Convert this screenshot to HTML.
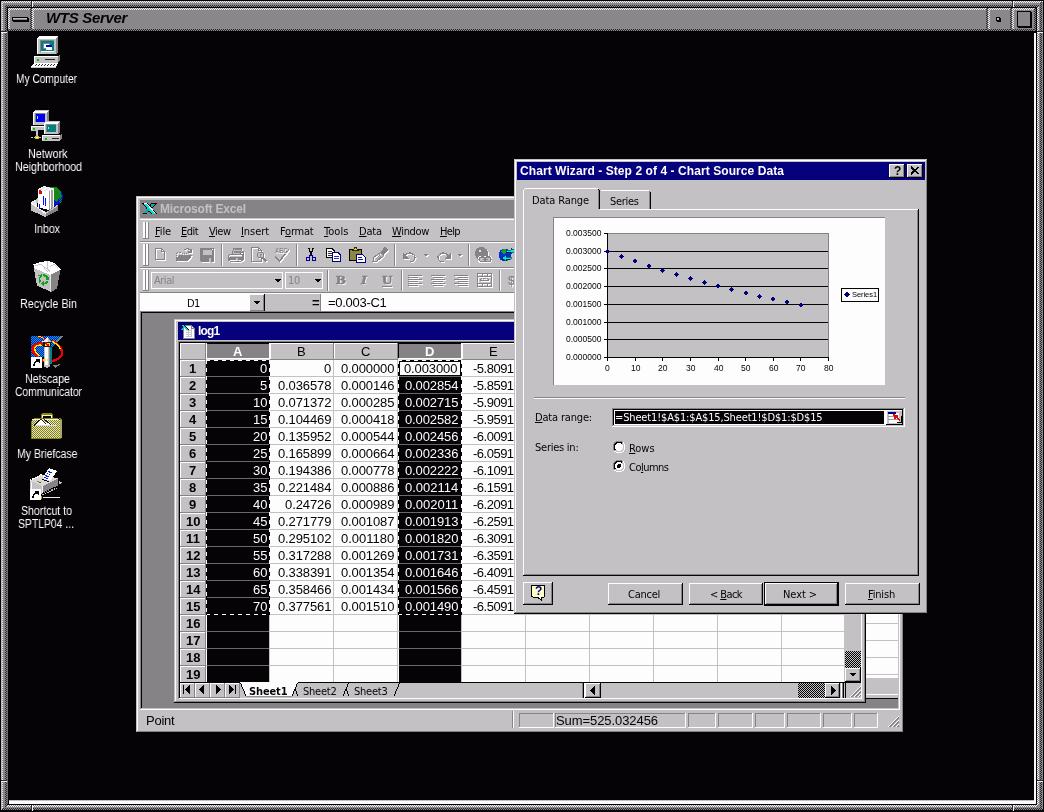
<!DOCTYPE html>
<html lang="en"><head><meta charset="utf-8"><title>WTS Server</title>
<style>
html,body{margin:0;padding:0;background:#050305;width:1044px;height:812px;overflow:hidden}
div,span,svg{position:absolute;box-sizing:border-box}
span{display:block;will-change:transform}
u{text-decoration:underline;text-underline-offset:1px;text-decoration-thickness:1px}
svg{overflow:visible;shape-rendering:crispEdges}
</style></head>
<body>
<div style="left:0px;top:0px;width:1044px;height:8px;background:#898789;"></div>
<div style="left:0px;top:804px;width:1044px;height:8px;background:#898789;"></div>
<div style="left:0px;top:0px;width:8px;height:812px;background:#898789;"></div>
<div style="left:1036px;top:0px;width:8px;height:812px;background:#898789;"></div>
<div style="left:1px;top:1px;width:1042px;height:2px;background:repeating-conic-gradient(#f4f4f4 0 25%,#898789 0 50%) 0 0/2px 2px;"></div>
<div style="left:5px;top:5px;width:1034px;height:2px;background:repeating-conic-gradient(#2a282a 0 25%,#898789 0 50%) 0 0/2px 2px;"></div>
<div style="left:1px;top:1px;width:2px;height:810px;background:repeating-conic-gradient(#f4f4f4 0 25%,#898789 0 50%) 0 0/2px 2px;"></div>
<div style="left:5px;top:5px;width:2px;height:802px;background:repeating-conic-gradient(#2a282a 0 25%,#898789 0 50%) 0 0/2px 2px;"></div>
<div style="left:7px;top:805px;width:1030px;height:2px;background:repeating-conic-gradient(#f4f4f4 0 25%,#898789 0 50%) 0 0/2px 2px;"></div>
<div style="left:2px;top:808px;width:1041px;height:2px;background:repeating-conic-gradient(#2a282a 0 25%,#898789 0 50%) 0 0/2px 2px;"></div>
<div style="left:1037px;top:7px;width:2px;height:798px;background:repeating-conic-gradient(#f4f4f4 0 25%,#898789 0 50%) 0 0/2px 2px;"></div>
<div style="left:1040px;top:2px;width:2px;height:809px;background:repeating-conic-gradient(#2a282a 0 25%,#898789 0 50%) 0 0/2px 2px;"></div>
<div style="left:0px;top:0px;width:1044px;height:1px;background:#050305;"></div>
<div style="left:0px;top:0px;width:1px;height:812px;background:#050305;"></div>
<div style="left:0px;top:810px;width:1044px;height:1px;background:#050305;"></div>
<div style="left:0px;top:811px;width:1044px;height:1px;background:#050305;"></div>
<div style="left:1043px;top:0px;width:1px;height:812px;background:#050305;"></div>
<div style="left:7px;top:7px;width:1030px;height:1px;background:#050305;"></div>
<div style="left:7px;top:7px;width:1px;height:24px;background:#050305;"></div>
<div style="left:7px;top:31px;width:1px;height:774px;background:#6e6c6f;"></div>
<div style="left:1px;top:2px;width:1px;height:808px;background:#bdbbbe;"></div>
<div style="left:7px;top:804px;width:1030px;height:1px;background:#050305;"></div>
<div style="left:1036px;top:7px;width:1px;height:798px;background:#050305;"></div>
<div style="left:31px;top:1px;width:1px;height:6px;background:#2a282a;"></div>
<div style="left:32px;top:1px;width:1px;height:6px;background:#f4f4f4;"></div>
<div style="left:31px;top:805px;width:1px;height:6px;background:#2a282a;"></div>
<div style="left:32px;top:805px;width:1px;height:6px;background:#f4f4f4;"></div>
<div style="left:1012px;top:1px;width:1px;height:6px;background:#2a282a;"></div>
<div style="left:1013px;top:1px;width:1px;height:6px;background:#f4f4f4;"></div>
<div style="left:1012px;top:805px;width:1px;height:6px;background:#2a282a;"></div>
<div style="left:1013px;top:805px;width:1px;height:6px;background:#f4f4f4;"></div>
<div style="left:1px;top:31px;width:6px;height:1px;background:#2a282a;"></div>
<div style="left:1px;top:32px;width:6px;height:1px;background:#f4f4f4;"></div>
<div style="left:1037px;top:31px;width:6px;height:1px;background:#2a282a;"></div>
<div style="left:1037px;top:32px;width:6px;height:1px;background:#f4f4f4;"></div>
<div style="left:1px;top:780px;width:6px;height:1px;background:#2a282a;"></div>
<div style="left:1px;top:781px;width:6px;height:1px;background:#f4f4f4;"></div>
<div style="left:1037px;top:780px;width:6px;height:1px;background:#2a282a;"></div>
<div style="left:1037px;top:781px;width:6px;height:1px;background:#f4f4f4;"></div>
<div style="left:8px;top:8px;width:1028px;height:23px;background:#898789;"></div>
<div style="left:8px;top:8px;width:24px;height:2px;background:repeating-conic-gradient(#f4f4f4 0 25%,#898789 0 50%) 0 0/2px 2px;"></div>
<div style="left:8px;top:8px;width:2px;height:23px;background:repeating-conic-gradient(#f4f4f4 0 25%,#898789 0 50%) 0 0/2px 2px;"></div>
<div style="left:8px;top:29px;width:24px;height:2px;background:repeating-conic-gradient(#2a282a 0 25%,#898789 0 50%) 0 0/2px 2px;"></div>
<div style="left:30px;top:8px;width:2px;height:23px;background:repeating-conic-gradient(#2a282a 0 25%,#898789 0 50%) 0 0/2px 2px;"></div>
<div style="left:32px;top:8px;width:956px;height:2px;background:repeating-conic-gradient(#f4f4f4 0 25%,#898789 0 50%) 0 0/2px 2px;"></div>
<div style="left:32px;top:8px;width:2px;height:23px;background:repeating-conic-gradient(#f4f4f4 0 25%,#898789 0 50%) 0 0/2px 2px;"></div>
<div style="left:32px;top:29px;width:956px;height:2px;background:repeating-conic-gradient(#2a282a 0 25%,#898789 0 50%) 0 0/2px 2px;"></div>
<div style="left:986px;top:8px;width:2px;height:23px;background:repeating-conic-gradient(#2a282a 0 25%,#898789 0 50%) 0 0/2px 2px;"></div>
<div style="left:988px;top:8px;width:24px;height:2px;background:repeating-conic-gradient(#f4f4f4 0 25%,#898789 0 50%) 0 0/2px 2px;"></div>
<div style="left:988px;top:8px;width:2px;height:23px;background:repeating-conic-gradient(#f4f4f4 0 25%,#898789 0 50%) 0 0/2px 2px;"></div>
<div style="left:988px;top:29px;width:24px;height:2px;background:repeating-conic-gradient(#2a282a 0 25%,#898789 0 50%) 0 0/2px 2px;"></div>
<div style="left:1010px;top:8px;width:2px;height:23px;background:repeating-conic-gradient(#2a282a 0 25%,#898789 0 50%) 0 0/2px 2px;"></div>
<div style="left:1012px;top:8px;width:24px;height:2px;background:repeating-conic-gradient(#f4f4f4 0 25%,#898789 0 50%) 0 0/2px 2px;"></div>
<div style="left:1012px;top:8px;width:2px;height:23px;background:repeating-conic-gradient(#f4f4f4 0 25%,#898789 0 50%) 0 0/2px 2px;"></div>
<div style="left:1012px;top:29px;width:24px;height:2px;background:repeating-conic-gradient(#2a282a 0 25%,#898789 0 50%) 0 0/2px 2px;"></div>
<div style="left:1034px;top:8px;width:2px;height:23px;background:repeating-conic-gradient(#2a282a 0 25%,#898789 0 50%) 0 0/2px 2px;"></div>
<div style="left:12px;top:17px;width:16px;height:4px;background:#898789;border:1px solid #050305;"></div>
<div style="left:13px;top:21px;width:16px;height:1px;background:#050305;"></div>
<div style="left:28px;top:18px;width:1px;height:4px;background:#050305;"></div>
<div style="left:13px;top:18px;width:14px;height:1px;background:#bbb;"></div>
<div style="left:996px;top:17px;width:4px;height:4px;background:#bbb;border:1px solid #050305;"></div>
<div style="left:997px;top:21px;width:4px;height:1px;background:#050305;"></div>
<div style="left:1000px;top:18px;width:1px;height:4px;background:#050305;"></div>
<div style="left:1017px;top:11px;width:14px;height:16px;background:#898789;border:1px solid #050305;"></div>
<div style="left:1018px;top:27px;width:14px;height:1px;background:#050305;"></div>
<div style="left:1031px;top:12px;width:1px;height:16px;background:#050305;"></div>
<span style="left:46.00px;top:10px;font:italic bold 15px 'Liberation Sans',sans-serif;line-height:16px;height:16px;color:#050305;white-space:pre;letter-spacing:-0.320px;">WTS Server</span>
<div style="left:8px;top:31px;width:1028px;height:773px;background:#050305;"></div>
<div style="left:9px;top:800px;width:1027px;height:1px;background:#bfbdc0;"></div>
<div style="left:9px;top:801px;width:1027px;height:3px;background:#fdfdfd;"></div>
<div style="left:1034px;top:33px;width:2px;height:771px;background:#fdfdfd;"></div>
<svg style="left:30px;top:36px" width="32" height="32" viewBox="0 0 32 32" >
<polygon points="7,2 9,0 28,0 28,16 26,18 7,18" fill="#c3c1c4"/>
<polygon points="7,2 9,0 28,0 26,2" fill="#fff"/><polygon points="26,2 28,0 28,16 26,18" fill="#858386"/>
<rect x="7" y="2" width="19" height="16" fill="#c3c1c4"/><path d="M7.5 18V2.5H26" stroke="#fff" fill="none"/>
<rect x="10" y="4" width="14" height="12" fill="#fff"/><rect x="11" y="5" width="13" height="10" fill="#00807f"/>
<path d="M10.5 16V4.5H24" stroke="#858386" fill="none"/>
<rect x="13" y="7" width="6" height="5" fill="#fff" stroke="#858386" stroke-width="1"/><rect x="16" y="9" width="6" height="5" fill="#fff"/><rect x="16" y="9" width="6" height="1.5" fill="#0000d0"/>
<polygon points="4,20 28,20 30,18 30,24 28,27 4,27" fill="#c3c1c4"/><polygon points="28,20 30,18 30,24 28,27" fill="#858386"/>
<path d="M4.5 27V20.5H28" stroke="#fff" fill="none"/>
<rect x="7" y="23" width="2" height="2" fill="#00c000"/><rect x="15" y="23" width="10" height="1.3" fill="#222"/>
<polygon points="1,31 4,27 28,27 26,31" fill="#fff"/><path d="M5 30l2-2M8 30l2-2M11 30l2-2M14 30l2-2M17 30l2-2M20 30l2-2M23 30l2-2" stroke="#222" stroke-width="1.2"/>
<path d="M1 31.5H26" stroke="#c3c1c4"/>
</svg>
<span style="left:16.00px;top:71px;font:12.5px 'Liberation Sans',sans-serif;line-height:16px;height:16px;color:#fdfdfd;white-space:pre;transform:scaleX(0.8130);transform-origin:0 0;">My Computer</span>
<svg style="left:30px;top:110px" width="32" height="32" viewBox="0 0 32 32" >
<g id="pcb"><polygon points="3,2 5,0 19,0 19,13 17,15 3,15" fill="#c3c1c4"/><polygon points="17,2 19,0 19,13 17,15" fill="#858386"/>
<path d="M3.5 15V2.5H17M4 1.5H18" stroke="#fff" fill="none"/>
<rect x="6" y="4" width="9" height="8" fill="#0000f0"/><path d="M5.5 12V3.5H15" stroke="#858386" fill="none"/><rect x="7" y="6" width="1.2" height="3" fill="#6ff"/></g>
<polygon points="1,16 14,16 15,15 15,20 1,21" fill="#c3c1c4"/><path d="M1.5 20V16.5H14" stroke="#fff" fill="none"/><rect x="3" y="18" width="2" height="1.5" fill="#00c000"/>
<rect x="6.3" y="21" width="1.4" height="6" fill="#c3c1c4"/><path d="M1 27.5h2M4 27.5h1M9 27.5h2M12 27.5h1" stroke="#c3c1c4"/>
<rect x="5" y="26" width="3.5" height="3" fill="#d8c800"/><rect x="6" y="26.5" width="1.5" height="1.5" fill="#fff"/>
<g transform="translate(11,11)"><polygon points="3,2 5,0 19,0 19,11 17,13 3,13" fill="#c3c1c4"/><polygon points="17,2 19,0 19,11 17,13" fill="#858386"/>
<path d="M3.5 13V2.5H17M4 1.5H18" stroke="#fff" fill="none"/>
<rect x="6" y="4" width="9" height="6.5" fill="#00807f"/><path d="M5.5 11V3.5H15" stroke="#858386" fill="none"/><rect x="7" y="5.5" width="1.2" height="2.5" fill="#6ff"/></g>
<polygon points="12,25 30,25 32,23 32,28 30,30.5 12,30.5" fill="#c3c1c4"/><polygon points="30,25 32,23 32,28 30,30.5" fill="#858386"/>
<path d="M12.5 30V25.5H30" stroke="#fff" fill="none"/><rect x="15" y="28" width="2" height="1.5" fill="#00c000"/><rect x="22" y="27.5" width="7" height="1.2" fill="#222"/>
</svg>
<span style="left:27.75px;top:146px;font:12.5px 'Liberation Sans',sans-serif;line-height:16px;height:16px;color:#fdfdfd;white-space:pre;transform:scaleX(0.8616);transform-origin:0 0;">Network</span>
<span style="left:14.50px;top:159px;font:12.5px 'Liberation Sans',sans-serif;line-height:16px;height:16px;color:#fdfdfd;white-space:pre;transform:scaleX(0.8530);transform-origin:0 0;">Neighborhood</span>
<svg style="left:24px;top:180px" width="48" height="42" viewBox="0 0 48 42" shape-rendering="auto">
<circle cx="30.500" cy="17" r="8.500" fill="#0010d8"/>
<path d="M24 9q5-4 10-1l3 4 1 5-3 1-2 4-3-2 0-4-4-2z" fill="#108818"/>
<path d="M34 13l3 2 1 6-2 4z" fill="url(#dth3)"/>
<polygon points="7,22 13,19 13.500,27 21.500,32 21.500,37 7,30.500" fill="#e6e6e6"/>
<polygon points="7,22 7,30.500 21.500,37 21.500,32.500" fill="#c3c1c4"/>
<polygon points="7,22 21.500,32.500 21.500,34 7,23.500" fill="#fff"/>
<polygon points="21.500,32.500 34,24.500 34,30.500 21.500,37" fill="#858386"/>
<polygon points="21.500,32.500 34,24.500 34,26 21.500,34" fill="#c3c1c4"/>
<polygon points="13.500,9 20,6 30,8.500 24.500,11.500" fill="#d8d8d8"/>
<path d="M15 8.300l10 2.500M17 7.500l10 2.500M19 6.600l10 2.500" stroke="#fff" stroke-width=".8"/>
<polygon points="24.500,11.500 30,8.500 30,27 24.500,30" fill="#fff"/>
<path d="M25.800 11v18.500M27.300 10.300v18.300M28.800 9.500v18" stroke="#858386" stroke-width=".8"/>
<polygon points="13.500,9 24.500,11.500 24.500,30 13.500,27" fill="#fff"/>
<polygon points="15,10 18,11 18,14.500 15,13.500" fill="#f00000"/>
<path d="M19.500 16v8.500M21.500 18v7.500M15.500 24v5" stroke="#0010f0" stroke-width="1.200"/>
<polygon points="12,19 13.500,18 13.500,23 12,22.500" fill="#c3c1c4"/>
</svg>
<span style="left:34.00px;top:221px;font:12.5px 'Liberation Sans',sans-serif;line-height:16px;height:16px;color:#fdfdfd;white-space:pre;transform:scaleX(0.8498);transform-origin:0 0;">Inbox</span>
<svg style="left:24px;top:255px" width="48" height="42" viewBox="0 0 48 42" shape-rendering="auto">
<polygon points="9.500,12 26.500,19.500 27,37 13,30.500" fill="#c3c1c4"/>
<polygon points="26.500,19.500 36.500,15 33,33.500 27,37" fill="#858386"/>
<polygon points="9.500,9.500 16,7 24,6 30,8 37,14.500 26.500,20 9.500,13" fill="#fff"/>
<path d="M11 11l6-2 8 7M17 9l7 8M24 6l-1 6 3 5M26 12l4-3 4 4" stroke="#c3c1c4" stroke-width=".9" fill="none"/>
<path d="M26.500 19.500V37" stroke="#e8e8e8" stroke-width=".8"/>
<path d="M15.500 27.500q-2-4 .5-6.500l-2-.5 4-1.500.5 4-1.500-1q-1.500 2 0 4.500z" fill="#10a018"/>
<path d="M19 19.500q3.500-1 5 2.500l1.500-1-.5 4.500-4-1.500 1.500-.8q-1-2-3-1.700z" fill="#10a018"/>
<path d="M24.500 26q-1 3.500-4.500 3.500l.3 1.700-3.300-2.700 3-2.500.2 1.700q2 0 2.500-2z" fill="#10a018"/>
</svg>
<span style="left:19.50px;top:296px;font:12.5px 'Liberation Sans',sans-serif;line-height:16px;height:16px;color:#fdfdfd;white-space:pre;transform:scaleX(0.8636);transform-origin:0 0;">Recycle Bin</span>
<svg style="left:24px;top:330px" width="48" height="42" viewBox="0 0 48 42" shape-rendering="auto">
<polygon points="7,6 39,6 27,18 27,27 7,27" fill="#0818d0"/>
<polygon points="7,6 39,6 27,18 27,27 7,27" fill="url(#dth)"/>
<polygon points="39,6 32.500,12.500 31.500,11.500 37,6" fill="#858386"/>
<path d="M19 14q-8-2-10.500 4 0 5 5.500 9" stroke="#f00000" stroke-width="2.400" fill="none"/>
<path d="M18.500 15.500q-6-1.500-8 3 .5 4 5 7.500" stroke="#ffe800" stroke-width="1.500" fill="none"/>
<path d="M14 7q6 0 8 4" stroke="#f00000" stroke-width="1.500" fill="none"/><path d="M13.500 6.500q5 0 7 3" stroke="#ffe800" stroke-width="1.200" fill="none"/>
<path d="M28 10.500q9 5 10.200 11.500 0 6-7.200 8.300-6 1.500-13 .2" stroke="#f00000" stroke-width="2.300" fill="none"/>
<path d="M28.500 11.500q6 3.500 8 7.500" stroke="#ffe800" stroke-width="1.300" fill="none"/>
<rect x="19.500" y="17" width="6.500" height="20" fill="#c3c1c4"/><rect x="21" y="17" width="2.500" height="20" fill="#fff"/><rect x="24.500" y="17" width="1.500" height="20" fill="#858386"/>
<rect x="26" y="17" width="1.500" height="17" fill="#008088"/>
<polygon points="18.500,11.500 23.500,7 27,11.500" fill="#f0f0f0"/><polygon points="23.500,7 27,11.500 24,11.500" fill="#c3c1c4"/>
<rect x="19" y="11.500" width="7.500" height="5.500" fill="#181818"/><rect x="20.500" y="12.500" width="5" height="3.500" fill="#ffe000"/><path d="M21 13h1.500v1.500h1.500v1.500" stroke="#f00000" stroke-width="1.200" fill="none"/>
<path d="M18.500 29.800h5" stroke="#ffe800" stroke-width="1.500" stroke-dasharray="1 1"/>
<polygon points="19.500,35 26,35 23,38.500" fill="#c3c1c4"/>
<polygon points="29,35.500 37,33.800 31.500,38" fill="#858386"/>
<rect x="7" y="27" width="10.500" height="10.500" fill="#fff"/>
<path d="M10.200 35.800q-.3-4 3.600-5.400" stroke="#000" stroke-width="1.800" fill="none"/><path d="M11.500 29h4.500v4.500z" fill="#000"/>
</svg>
<span style="left:25.00px;top:371px;font:12.5px 'Liberation Sans',sans-serif;line-height:16px;height:16px;color:#fdfdfd;white-space:pre;transform:scaleX(0.8521);transform-origin:0 0;">Netscape</span>
<span style="left:14.50px;top:384px;font:12.5px 'Liberation Sans',sans-serif;line-height:16px;height:16px;color:#fdfdfd;white-space:pre;transform:scaleX(0.8243);transform-origin:0 0;">Communicator</span>
<svg style="left:24px;top:406px" width="48" height="42" viewBox="0 0 48 42" shape-rendering="auto">
<path d="M18 14.500v-4.500q0-1.500 1.500-1.500h7q1.500 0 1.500 1.500v4.500" stroke="#8a8800" stroke-width="2.600" fill="none"/>
<path d="M18.600 14v-4q0-.8 .8-.8h7.200q.8 0 .8 .8v4" stroke="#fff" stroke-width=".9" fill="none"/>
<polygon points="7,15 10,12 36,12 38,14 38,31 36,33 7,33" fill="#858300"/>
<rect x="8" y="13" width="28" height="19" fill="#e2e2d8"/><rect x="8" y="13" width="28" height="19" fill="url(#dth2)"/>
<rect x="36" y="14" width="2" height="18" fill="#a8a868"/>
<path d="M8 13.500h28" stroke="#f4f4e8" stroke-width="1.200"/>
<polygon points="10,19 17,12.800 21,16.500 23.500,14 28,19" fill="#fff"/>
<path d="M10 19.500l7-6.700M17 12.800l4.500 5M19 12l8 7M36 14l-1.500-1.500" stroke="#181818" stroke-width="1"/>
<path d="M10.500 19.800h21.500" stroke="#d8d8d8" stroke-width="1.200"/>
</svg>
<span style="left:17.25px;top:446px;font:12.5px 'Liberation Sans',sans-serif;line-height:16px;height:16px;color:#fdfdfd;white-space:pre;transform:scaleX(0.8374);transform-origin:0 0;">My Briefcase</span>
<svg style="left:24px;top:462px" width="48" height="42" viewBox="0 0 48 42" shape-rendering="auto">
<polygon points="6,18.500 18,12.500 34,16.500 18.500,24" fill="#d8d8d8"/>
<path d="M6 18.500l12-6" stroke="#fff" stroke-width="1.800" stroke-dasharray="1.200 .8"/>
<polygon points="6,18.500 18.500,24 18.500,32.500 6,27" fill="#c3c1c4"/>
<polygon points="6.500,19 8,19.800 8,27 6.500,26.500" fill="#fff"/>
<polygon points="18.500,24 34,16.500 34,24 18.500,32.500" fill="#858386"/>
<path d="M18.500 24.200v8" stroke="#f0f0f0" stroke-width="1"/>
<path d="M18.500 31.500l15-7.500" stroke="#000" stroke-width="1.300" stroke-dasharray="1.500 1"/>
<path d="M18.500 33l14-7" stroke="#c3c1c4" stroke-width="1.200" stroke-dasharray="1.500 1"/>
<polygon points="25,6 33,9 26,19 18.500,16" fill="#fff"/>
<path d="M24.500 9.500l3.500 1.300M22.800 11.500l3.500 1.300M21.200 13.500l3.500 1.300M20 15.500l3.500 1.300" stroke="#0818f0" stroke-width="1.400" stroke-dasharray="1.600 .6"/>
<path d="M18 17l7 3" stroke="#000" stroke-width="1"/>
<rect x="12.500" y="19" width="2.200" height="1.300" fill="#00d800"/><rect x="14.800" y="20" width="2.200" height="1.300" fill="#f00000"/>
<polygon points="35,19 38,20.500 35,22.500" fill="#c3c1c4"/>
<path d="M19 35.500h17" stroke="#f0f0f0" stroke-width="1.400"/><rect x="16.800" y="34" width="1" height="3" fill="#b8a800"/>
<rect x="6" y="27" width="10.500" height="10.500" fill="#fff"/>
<path d="M9.200 35.800q-.3-4 3.600-5.400" stroke="#000" stroke-width="1.800" fill="none"/><path d="M10.500 29h4.500v4.500z" fill="#000"/>
</svg>
<span style="left:21.00px;top:503px;font:12.5px 'Liberation Sans',sans-serif;line-height:16px;height:16px;color:#fdfdfd;white-space:pre;transform:scaleX(0.8436);transform-origin:0 0;">Shortcut to</span>
<span style="left:18.00px;top:516px;font:12.5px 'Liberation Sans',sans-serif;line-height:16px;height:16px;color:#fdfdfd;white-space:pre;transform:scaleX(0.8308);transform-origin:0 0;">SPTLP04 ...</span>
<svg width="0" height="0" style="left:0;top:0"><defs><pattern id="dth" width="2" height="2" patternUnits="userSpaceOnUse"><rect width="1" height="1" fill="#00a0c0"/><rect x="1" y="1" width="1" height="1" fill="#00a0c0"/></pattern><pattern id="dth2" width="2" height="2" patternUnits="userSpaceOnUse"><rect width="1" height="1" fill="#858300"/><rect x="1" y="1" width="1" height="1" fill="#858300"/></pattern><pattern id="dth3" width="2" height="2" patternUnits="userSpaceOnUse"><rect width="1" height="1" fill="#108818"/><rect x="1" y="1" width="1" height="1" fill="#108818"/></pattern></defs></svg>
<div style="left:136px;top:196px;width:768px;height:537px;background:#c3c1c4;"></div>
<div style="left:137px;top:197px;width:765px;height:1px;background:#fdfdfd;"></div>
<div style="left:137px;top:197px;width:1px;height:534px;background:#fdfdfd;"></div>
<div style="left:136px;top:732px;width:768px;height:1px;background:#050305;"></div>
<div style="left:903px;top:196px;width:1px;height:537px;background:#050305;"></div>
<div style="left:137px;top:731px;width:766px;height:1px;background:#858386;"></div>
<div style="left:902px;top:197px;width:1px;height:535px;background:#858386;"></div>
<div style="left:140px;top:200px;width:760px;height:18px;background:#858386;"></div>
<svg style="left:141px;top:202px" width="17" height="14" viewBox="0 0 17 14" >
<path d="M1 1h6l9 11h-6z" fill="#000"/><path d="M10 1h6l-5 5-2-2zM1 12l6-6 2 2-3 4z" fill="#000"/>
<path d="M2 1.500h4l9 10h-4z" fill="#00e0e0"/><path d="M2.500 1.500h3l8.500 9.500" stroke="#fff" stroke-width="1" fill="none"/>
<path d="M11 1.800h3.500l-3.500 3.500-1.500-1.500zM2.500 11.200l4.500-4.500 1.500 1.500-2.500 3z" fill="#00b0b0"/>
</svg>
<span style="left:159.50px;top:201px;font:bold 12px 'Liberation Sans',sans-serif;line-height:16px;height:16px;color:#c3c1c4;white-space:pre;letter-spacing:-0.180px;">Microsoft Excel</span>
<div style="left:140px;top:219px;width:760px;height:1px;background:#fdfdfd;"></div>
<div style="left:143px;top:222px;width:1px;height:17px;background:#fdfdfd;"></div>
<div style="left:144px;top:222px;width:1px;height:17px;background:#fdfdfd;"></div>
<div style="left:145px;top:222px;width:1px;height:17px;background:#858386;"></div>
<div style="left:143px;top:238px;width:3px;height:1px;background:#858386;"></div>
<div style="left:146px;top:222px;width:1px;height:17px;background:#fdfdfd;"></div>
<div style="left:147px;top:222px;width:1px;height:17px;background:#fdfdfd;"></div>
<div style="left:148px;top:222px;width:1px;height:17px;background:#858386;"></div>
<div style="left:146px;top:238px;width:3px;height:1px;background:#858386;"></div>
<span style="left:154.50px;top:224px;font:11px 'DejaVu Sans Condensed','Liberation Sans',sans-serif;line-height:16px;height:16px;color:#050305;white-space:pre;letter-spacing:-0.121px;"><u>F</u>ile</span>
<span style="left:181.00px;top:224px;font:11px 'DejaVu Sans Condensed','Liberation Sans',sans-serif;line-height:16px;height:16px;color:#050305;white-space:pre;letter-spacing:-0.543px;"><u>E</u>dit</span>
<span style="left:208.50px;top:224px;font:11px 'DejaVu Sans Condensed','Liberation Sans',sans-serif;line-height:16px;height:16px;color:#050305;white-space:pre;letter-spacing:-0.492px;"><u>V</u>iew</span>
<span style="left:241.00px;top:224px;font:11px 'DejaVu Sans Condensed','Liberation Sans',sans-serif;line-height:16px;height:16px;color:#050305;white-space:pre;letter-spacing:-0.065px;"><u>I</u>nsert</span>
<span style="left:279.50px;top:224px;font:11px 'DejaVu Sans Condensed','Liberation Sans',sans-serif;line-height:16px;height:16px;color:#050305;white-space:pre;letter-spacing:-0.219px;">F<u>o</u>rmat</span>
<span style="left:324.00px;top:224px;font:11px 'DejaVu Sans Condensed','Liberation Sans',sans-serif;line-height:16px;height:16px;color:#050305;white-space:pre;letter-spacing:0.062px;"><u>T</u>ools</span>
<span style="left:358.50px;top:224px;font:11px 'DejaVu Sans Condensed','Liberation Sans',sans-serif;line-height:16px;height:16px;color:#050305;white-space:pre;letter-spacing:-0.160px;"><u>D</u>ata</span>
<span style="left:392.00px;top:224px;font:11px 'DejaVu Sans Condensed','Liberation Sans',sans-serif;line-height:16px;height:16px;color:#050305;white-space:pre;letter-spacing:-0.333px;"><u>W</u>indow</span>
<span style="left:440.00px;top:224px;font:11px 'DejaVu Sans Condensed','Liberation Sans',sans-serif;line-height:16px;height:16px;color:#050305;white-space:pre;letter-spacing:-0.645px;"><u>H</u>elp</span>
<div style="left:140px;top:241px;width:760px;height:1px;background:#858386;"></div>
<div style="left:140px;top:242px;width:760px;height:1px;background:#fdfdfd;"></div>
<div style="left:140px;top:267px;width:760px;height:1px;background:#858386;"></div>
<div style="left:140px;top:268px;width:760px;height:1px;background:#fdfdfd;"></div>
<div style="left:140px;top:292px;width:760px;height:1px;background:#858386;"></div>
<div style="left:140px;top:293px;width:760px;height:1px;background:#fdfdfd;"></div>
<div style="left:143px;top:244px;width:1px;height:22px;background:#fdfdfd;"></div>
<div style="left:144px;top:244px;width:1px;height:22px;background:#fdfdfd;"></div>
<div style="left:145px;top:244px;width:1px;height:22px;background:#858386;"></div>
<div style="left:143px;top:265px;width:3px;height:1px;background:#858386;"></div>
<div style="left:146px;top:244px;width:1px;height:22px;background:#fdfdfd;"></div>
<div style="left:147px;top:244px;width:1px;height:22px;background:#fdfdfd;"></div>
<div style="left:148px;top:244px;width:1px;height:22px;background:#858386;"></div>
<div style="left:146px;top:265px;width:3px;height:1px;background:#858386;"></div>
<div style="left:143px;top:270px;width:1px;height:21px;background:#fdfdfd;"></div>
<div style="left:144px;top:270px;width:1px;height:21px;background:#fdfdfd;"></div>
<div style="left:145px;top:270px;width:1px;height:21px;background:#858386;"></div>
<div style="left:143px;top:290px;width:3px;height:1px;background:#858386;"></div>
<div style="left:146px;top:270px;width:1px;height:21px;background:#fdfdfd;"></div>
<div style="left:147px;top:270px;width:1px;height:21px;background:#fdfdfd;"></div>
<div style="left:148px;top:270px;width:1px;height:21px;background:#858386;"></div>
<div style="left:146px;top:290px;width:3px;height:1px;background:#858386;"></div>
<svg style="left:154px;top:247px" width="17" height="17" viewBox="0 0 17 17" ><g transform="translate(1,1)" stroke="#fff" fill="none" stroke-width="1" class="w"><path d="M1.500 1.500h6l3 3v8h-9zM7.500 1.500v3h3"/></g><g stroke="#858386" fill="none" stroke-width="1"><path d="M1.500 1.500h6l3 3v8h-9zM7.500 1.500v3h3"/></g></svg>
<svg style="left:176px;top:247px" width="17" height="17" viewBox="0 0 17 17" ><g transform="translate(1,1)" stroke="#fff" fill="none" stroke-width="1" class="w"><path d="M.5 5.500v8M.5 5.500h4l1 1h5v2" stroke-dasharray="1 1"/><path d="M.5 13.500v-2.500l4-3h11.500l-4.500 5.500z" fill="#fff"/><path d="M8.500 3q2.500-2.500 5.500 0l.5 1.500m-2.500 .5h3v-3" stroke-width="1.100"/></g><g stroke="#858386" fill="none" stroke-width="1"><path d="M.5 5.500v8M.5 5.500h4l1 1h5v2" stroke-dasharray="1 1"/><path d="M.5 13.500v-2.500l4-3h11.500l-4.500 5.500z" fill="#858386"/><path d="M8.500 3q2.500-2.500 5.500 0l.5 1.500m-2.500 .5h3v-3" stroke-width="1.100"/></g></svg>
<svg style="left:200px;top:248px" width="17" height="17" viewBox="0 0 17 17" ><g transform="translate(1,1)" stroke="#fff" fill="none" stroke-width="1" class="w"><path d="M.5 .500h13v13h-12l-1-1z" fill="#fff"/><rect x="3" y="1.500" width="8.500" height="5" fill="#c3c1c4" stroke="none"/><rect x="9" y="10" width="2" height="3.500" fill="#c3c1c4" stroke="none"/><rect x="12" y="1" width="1" height="1" fill="#fff" stroke="none"/></g><g stroke="#858386" fill="none" stroke-width="1"><path d="M.5 .500h13v13h-12l-1-1z" fill="#858386"/><rect x="3" y="1.500" width="8.500" height="5" fill="#c3c1c4" stroke="none"/><rect x="9" y="10" width="2" height="3.500" fill="#c3c1c4" stroke="none"/><rect x="12" y="1" width="1" height="1" fill="#fff" stroke="none"/></g></svg>
<div style="left:221px;top:244px;width:1px;height:22px;background:#858386;"></div>
<div style="left:222px;top:244px;width:1px;height:22px;background:#fdfdfd;"></div>
<svg style="left:228px;top:247px" width="18" height="17" viewBox="0 0 18 17" ><g transform="translate(1,1)" stroke="#fff" fill="none" stroke-width="1" class="w"><path d="M4 6.500l2-5.500h8l-2 5.500" fill="#c3c1c4"/><path d="M6.500 2.500h6M6 4h6M5.500 5.500h6" stroke-width=".9"/><path d="M2 7.500q-1.500 0-1.500 1.500v3.500q0 1.500 1.500 1.500h11q1.500 0 1.500-1.500v-3.500q0-1.500-1.500-1.500z"/><path d="M1 10.500h14v2h-14z" fill="#fff"/><path d="M12 6.500l3.500-2v6l-1.500 1.500" /><rect x="7.500" y="10.500" width="2" height="2" fill="#c3c1c4" stroke="none"/></g><g stroke="#858386" fill="none" stroke-width="1"><path d="M4 6.500l2-5.500h8l-2 5.500" fill="#c3c1c4"/><path d="M6.500 2.500h6M6 4h6M5.500 5.500h6" stroke-width=".9"/><path d="M2 7.500q-1.500 0-1.500 1.500v3.500q0 1.500 1.500 1.500h11q1.500 0 1.500-1.500v-3.500q0-1.500-1.500-1.500z"/><path d="M1 10.500h14v2h-14z" fill="#858386"/><path d="M12 6.500l3.500-2v6l-1.500 1.500" /><rect x="7.500" y="10.500" width="2" height="2" fill="#c3c1c4" stroke="none"/></g></svg>
<svg style="left:251px;top:247px" width="17" height="17" viewBox="0 0 17 17" ><g transform="translate(1,1)" stroke="#fff" fill="none" stroke-width="1" class="w"><path d="M.5 .500h7l3 3v10.500h-10zM7.500 .500v3h3"/><circle cx="9.500" cy="8" r="3" fill="#c3c1c4"/><path d="M11.800 10.500l3.500 3.800" stroke-width="1.800"/><path d="M8.500 7.500q1-1.500 2.500 0M9.500 7v2.500" stroke-width=".8"/></g><g stroke="#858386" fill="none" stroke-width="1"><path d="M.5 .500h7l3 3v10.500h-10zM7.500 .500v3h3"/><circle cx="9.500" cy="8" r="3" fill="#c3c1c4"/><path d="M11.800 10.500l3.500 3.800" stroke-width="1.800"/><path d="M8.500 7.500q1-1.500 2.500 0M9.500 7v2.500" stroke-width=".8"/></g></svg>
<svg style="left:274px;top:247px" width="18" height="18" viewBox="0 0 18 18" ><g transform="translate(1,1)" stroke="#fff" fill="none" stroke-width="1" class="w"><path d="M1.500 9.500l4 4.500 9.500-11.500" stroke-width="1.500"/></g><g stroke="#858386" fill="none" stroke-width="1"><path d="M1.500 9.500l4 4.500 9.500-11.500" stroke-width="1.500"/></g></svg>
<span style="left:274.500px;top:247px;font:bold 7px 'Liberation Sans',sans-serif;color:#858386;line-height:8px;transform:scaleX(.84);transform-origin:0 0;text-shadow:1px 1px 0 #fff">ABC</span>
<div style="left:296px;top:244px;width:1px;height:22px;background:#858386;"></div>
<div style="left:297px;top:244px;width:1px;height:22px;background:#fdfdfd;"></div>
<svg style="left:306px;top:248px" width="10" height="14" viewBox="0 0 10 14" ><path d="M3 0l2 7M7 0l-2 7" stroke="#000" stroke-width="1.300" fill="none"/><path d="M5 6.500l-2.500 3M5 6.500l2.500 3" stroke="#00007f" stroke-width="1.200" fill="none"/><circle cx="2.200" cy="11" r="1.800" stroke="#0000a8" stroke-width="1.100" fill="none"/><circle cx="7.800" cy="11" r="1.800" stroke="#0000a8" stroke-width="1.100" fill="none"/></svg>
<svg style="left:326px;top:248px" width="16" height="14" viewBox="0 0 16 14" ><path d="M.5 .500h5.500l2.500 2.500v6.500h-8z" fill="#fff" stroke="#000"/><path d="M2 3.500h4M2 5.500h5M2 7.500h5" stroke="#000" stroke-width=".8"/><path d="M6.500 4.500h5.500l2.500 2.500v6.500h-8z" fill="#fff" stroke="#00007f"/><path d="M8 8.500h5M8 10.500h5" stroke="#00007f" stroke-width=".8"/></svg>
<svg style="left:349px;top:247px" width="17" height="16" viewBox="0 0 17 16" ><rect x=".5" y="2.500" width="12" height="11" rx="1" fill="#8a8840" stroke="#000"/><path d="M3.500 3.500h6v-1.500h-1.500q0-1.500-1.500-1.500t-1.500 1.500h-1.500z" fill="#e8e000" stroke="#000" stroke-width=".8"/><path d="M7.500 7.500h6l2.500 2.500v5h-8.500z" fill="#fff" stroke="#00007f"/><path d="M9 10.500h4M9 12.500h5" stroke="#00007f" stroke-width=".9"/></svg>
<svg style="left:372px;top:247px" width="18" height="18" viewBox="0 0 18 18" ><g transform="translate(1,1)" stroke="#fff" fill="none" stroke-width="1" class="w"><path d="M9 5l4-4.500 2.500 2.500-4 4z" fill="#fff"/><path d="M8.500 5.500l3 3-6.500 5.500-4.500.5 1-1 .5-3.500z"/><path d="M3.500 11l4-3.500M5 12.500l4-3.500" stroke-width=".8"/></g><g stroke="#858386" fill="none" stroke-width="1"><path d="M9 5l4-4.500 2.500 2.500-4 4z" fill="#858386"/><path d="M8.500 5.500l3 3-6.500 5.500-4.500.5 1-1 .5-3.500z"/><path d="M3.500 11l4-3.500M5 12.500l4-3.500" stroke-width=".8"/></g></svg>
<div style="left:394px;top:244px;width:1px;height:22px;background:#858386;"></div>
<div style="left:395px;top:244px;width:1px;height:22px;background:#fdfdfd;"></div>
<svg style="left:402px;top:250px" width="16" height="12" viewBox="0 0 16 12" ><g transform="translate(1,1)" stroke="#fff" fill="none" stroke-width="1" class="w"><path d="M2.500 5.500q6-5 10 0 1.500 3.500-2 6h-3" stroke-width="1.300"/><path d="M.5 2.500v6h6z" fill="#fff" stroke="none"/></g><g stroke="#858386" fill="none" stroke-width="1"><path d="M2.500 5.500q6-5 10 0 1.500 3.500-2 6h-3" stroke-width="1.300"/><path d="M.5 2.500v6h6z" fill="#858386" stroke="none"/></g></svg>
<svg style="left:423px;top:253px" width="8" height="6" viewBox="0 0 8 6" ><g transform="translate(1,1)" stroke="#fff" fill="none" stroke-width="1" class="w"><path d="M0 .500h6l-3 3.500z" fill="#fff" stroke="none"/></g><g stroke="#858386" fill="none" stroke-width="1"><path d="M0 .500h6l-3 3.500z" fill="#858386" stroke="none"/></g></svg>
<svg style="left:437px;top:250px" width="16" height="12" viewBox="0 0 16 12" ><g transform="translate(1,1)" stroke="#fff" fill="none" stroke-width="1" class="w"><path d="M11.500 5.500q-6-5-10 0-1.500 3.500 2 6h3" stroke-width="1.300"/><path d="M13.500 2.500v6h-6z" fill="#fff" stroke="none"/></g><g stroke="#858386" fill="none" stroke-width="1"><path d="M11.500 5.500q-6-5-10 0-1.500 3.500 2 6h3" stroke-width="1.300"/><path d="M13.500 2.500v6h-6z" fill="#858386" stroke="none"/></g></svg>
<svg style="left:457px;top:253px" width="8" height="6" viewBox="0 0 8 6" ><g transform="translate(1,1)" stroke="#fff" fill="none" stroke-width="1" class="w"><path d="M0 .500h6l-3 3.500z" fill="#fff" stroke="none"/></g><g stroke="#858386" fill="none" stroke-width="1"><path d="M0 .500h6l-3 3.500z" fill="#858386" stroke="none"/></g></svg>
<div style="left:468px;top:244px;width:1px;height:22px;background:#858386;"></div>
<div style="left:469px;top:244px;width:1px;height:22px;background:#fdfdfd;"></div>
<svg style="left:475px;top:247px" width="18" height="17" viewBox="0 0 18 17" ><g transform="translate(1,1)" stroke="#fff" fill="none" stroke-width="1" class="w"><circle cx="6.500" cy="6.500" r="6" fill="#fff"/></g><g stroke="#858386" fill="none" stroke-width="1"><circle cx="6.500" cy="6.500" r="6" fill="#858386"/></g></svg>
<svg style="left:478px;top:256px" width="15" height="8" viewBox="0 0 15 8" shape-rendering="auto"><rect x=".5" y=".500" width="13" height="6" rx="3" fill="#c3c1c4" stroke="#fdfdfd" stroke-width="1.500"/><rect x="1" y="1" width="6.500" height="4.500" rx="2.200" fill="none" stroke="#858386" stroke-width="1.200"/><rect x="6.500" y="1" width="6.500" height="4.500" rx="2.200" fill="none" stroke="#858386" stroke-width="1.200"/><path d="M4.500 3.300h5.500" stroke="#858386" stroke-width="1.400"/></svg>
<svg style="left:478px;top:249px" width="6" height="5" viewBox="0 0 6 5" ><circle cx="2" cy="2" r="1.600" fill="#e4e4e4"/></svg>
<svg style="left:498px;top:247px" width="17" height="17" viewBox="0 0 17 17" ><circle cx="7" cy="8" r="6.500" fill="#0030d0"/><path d="M3 4q3-3 6-1l-1 3-3 1zM6 9l4 1 0 4-3-1z" fill="#20a020"/><path d="M8 3h5v-2l4 3-4 3v-2h-5z" fill="#00e8e8" stroke="#000" stroke-width=".5"/><path d="M13 10h-5v-2l-4 3 4 3v-2h5z" fill="#00e8e8" stroke="#000" stroke-width=".5"/></svg>
<div style="left:151px;top:272px;width:132px;height:17px;border:1px solid #fdfdfd;"></div>
<span style="left:154.00px;top:273px;font:11px 'DejaVu Sans Condensed','Liberation Sans',sans-serif;line-height:16px;height:16px;color:#858386;white-space:pre;letter-spacing:-0.481px;">Arial</span>
<svg style="left:274px;top:279px" width="7" height="4" viewBox="0 0 7 4" ><path d="M0 0h7l-3.500 3.500z" fill="#000"/></svg>
<div style="left:285px;top:272px;width:38px;height:17px;border:1px solid #fdfdfd;"></div>
<span style="left:288.00px;top:273px;font:11px 'DejaVu Sans Condensed','Liberation Sans',sans-serif;line-height:16px;height:16px;color:#858386;white-space:pre;letter-spacing:-0.297px;">10</span>
<svg style="left:314px;top:279px" width="7" height="4" viewBox="0 0 7 4" ><path d="M0 0h7l-3.500 3.500z" fill="#000"/></svg>
<div style="left:327px;top:270px;width:1px;height:21px;background:#858386;"></div>
<div style="left:328px;top:270px;width:1px;height:21px;background:#fdfdfd;"></div>
<span style="left:336px;top:272px;font:bold 13px 'Liberation Serif',serif;color:#858386;line-height:16px;-webkit-text-stroke:.6px #858386;text-shadow:1px 1px 0 #fff;transform:scaleX(1.12);transform-origin:0 0;">B</span>
<span style="left:360.5px;top:272px;font:italic bold 13px 'Liberation Serif',serif;color:#858386;line-height:16px;-webkit-text-stroke:.6px #858386;text-shadow:1px 1px 0 #fff;transform:scaleX(1.12);transform-origin:0 0;">I</span>
<span style="left:382px;top:272px;font:bold 13px 'Liberation Serif',serif;color:#858386;line-height:16px;-webkit-text-stroke:.6px #858386;text-shadow:1px 1px 0 #fff;transform:scaleX(1.12);transform-origin:0 0;">U</span>
<div style="left:382px;top:286px;width:10px;height:1px;background:#858386;"></div>
<div style="left:383px;top:287px;width:10px;height:1px;background:#fdfdfd;"></div>
<div style="left:401px;top:270px;width:1px;height:21px;background:#858386;"></div>
<div style="left:402px;top:270px;width:1px;height:21px;background:#fdfdfd;"></div>
<svg style="left:408px;top:275px" width="16" height="13" viewBox="0 0 16 13" ><g transform="translate(1,1)" stroke="#fff" fill="none" stroke-width="1" class="w"><path d="M0 0.5H14"/><path d="M0 2.5H10"/><path d="M0 4.5H14"/><path d="M0 6.5H10"/><path d="M0 8.5H14"/><path d="M0 10.5H10"/></g><g stroke="#858386" fill="none" stroke-width="1"><path d="M0 0.5H14"/><path d="M0 2.5H10"/><path d="M0 4.5H14"/><path d="M0 6.5H10"/><path d="M0 8.5H14"/><path d="M0 10.5H10"/></g></svg>
<svg style="left:431px;top:275px" width="16" height="13" viewBox="0 0 16 13" ><g transform="translate(1,1)" stroke="#fff" fill="none" stroke-width="1" class="w"><path d="M0 0.5H14"/><path d="M2 2.5H12"/><path d="M0 4.5H14"/><path d="M2 6.5H12"/><path d="M0 8.5H14"/><path d="M2 10.5H12"/></g><g stroke="#858386" fill="none" stroke-width="1"><path d="M0 0.5H14"/><path d="M2 2.5H12"/><path d="M0 4.5H14"/><path d="M2 6.5H12"/><path d="M0 8.5H14"/><path d="M2 10.5H12"/></g></svg>
<svg style="left:454px;top:275px" width="16" height="13" viewBox="0 0 16 13" ><g transform="translate(1,1)" stroke="#fff" fill="none" stroke-width="1" class="w"><path d="M0 0.5H14"/><path d="M4 2.5H14"/><path d="M0 4.5H14"/><path d="M4 6.5H14"/><path d="M0 8.5H14"/><path d="M4 10.5H14"/></g><g stroke="#858386" fill="none" stroke-width="1"><path d="M0 0.5H14"/><path d="M4 2.5H14"/><path d="M0 4.5H14"/><path d="M4 6.5H14"/><path d="M0 8.5H14"/><path d="M4 10.5H14"/></g></svg>
<svg style="left:477px;top:273px" width="17" height="16" viewBox="0 0 17 16" ><g transform="translate(1,1)" stroke="#fff" fill="none" stroke-width="1" class="w"><path d="M.5 .500h14v13h-14zM.5 3.500h14M.5 10.500h14M5.500 .500v3M10.500 .500v3M5.500 10.500v3M10.500 10.500v3M3 7h9M3 7l1.500-1.500M3 7l1.500 1.500M12 7l-1.500-1.500M12 7l-1.500 1.500"/><path d="M6 5.500h3" stroke-width=".8"/></g><g stroke="#858386" fill="none" stroke-width="1"><path d="M.5 .500h14v13h-14zM.5 3.500h14M.5 10.500h14M5.500 .500v3M10.500 .500v3M5.500 10.500v3M10.500 10.500v3M3 7h9M3 7l1.500-1.500M3 7l1.500 1.500M12 7l-1.500-1.500M12 7l-1.500 1.500"/><path d="M6 5.500h3" stroke-width=".8"/></g></svg>
<div style="left:499px;top:270px;width:1px;height:21px;background:#858386;"></div>
<div style="left:500px;top:270px;width:1px;height:21px;background:#fdfdfd;"></div>
<span style="left:508px;top:273px;font:bold 13px 'Liberation Sans',sans-serif;color:#858386;line-height:16px;text-shadow:1px 1px 0 #fff">$</span>
<div style="left:140px;top:294px;width:109px;height:18px;background:#fdfdfd;"></div>
<span style="left:187.25px;top:296px;font:11px 'DejaVu Sans Condensed','Liberation Sans',sans-serif;line-height:16px;height:16px;color:#050305;white-space:pre;letter-spacing:-0.711px;">D1</span>
<div style="left:249px;top:294px;width:16px;height:18px;background:#c3c1c4;"></div>
<div style="left:249px;top:294px;width:15px;height:1px;background:#fdfdfd;"></div>
<div style="left:249px;top:294px;width:1px;height:17px;background:#fdfdfd;"></div>
<div style="left:249px;top:311px;width:16px;height:1px;background:#050305;"></div>
<div style="left:264px;top:294px;width:1px;height:18px;background:#050305;"></div>
<div style="left:250px;top:310px;width:14px;height:1px;background:#858386;"></div>
<div style="left:263px;top:295px;width:1px;height:16px;background:#858386;"></div>
<svg style="left:253px;top:301px" width="8" height="4" viewBox="0 0 8 4" ><path d="M0 0h7l-3.500 3.500z" fill="#000"/></svg>
<span style="left:312.00px;top:295px;font:bold 13px 'Liberation Sans',sans-serif;line-height:16px;height:16px;color:#050305;white-space:pre;">=</span>
<div style="left:321px;top:294px;width:579px;height:18px;background:#fdfdfd;"></div>
<div style="left:320px;top:294px;width:1px;height:18px;background:#858386;"></div>
<span style="left:327.50px;top:295px;font:13px 'Liberation Sans',sans-serif;line-height:16px;height:16px;color:#050305;white-space:pre;letter-spacing:-0.286px;">=0.003-C1</span>
<div style="left:140px;top:311px;width:760px;height:399px;background:#858386;"></div>
<div style="left:140px;top:311px;width:759px;height:1px;background:#858386;"></div>
<div style="left:140px;top:311px;width:1px;height:398px;background:#858386;"></div>
<div style="left:141px;top:312px;width:757px;height:1px;background:#050305;"></div>
<div style="left:141px;top:312px;width:1px;height:396px;background:#050305;"></div>
<div style="left:141px;top:708px;width:758px;height:1px;background:#c3c1c4;"></div>
<div style="left:898px;top:312px;width:1px;height:397px;background:#c3c1c4;"></div>
<div style="left:140px;top:709px;width:760px;height:1px;background:#fdfdfd;"></div>
<div style="left:899px;top:311px;width:1px;height:399px;background:#fdfdfd;"></div>
<span style="left:146.00px;top:713px;font:13px 'Liberation Sans',sans-serif;line-height:16px;height:16px;color:#050305;white-space:pre;letter-spacing:-0.228px;">Point</span>
<div style="left:512px;top:711px;width:1px;height:17px;background:#858386;"></div>
<div style="left:513px;top:711px;width:1px;height:17px;background:#fdfdfd;"></div>
<div style="left:519px;top:713px;width:35px;height:15px;background:#c3c1c4;"></div>
<div style="left:519px;top:713px;width:34px;height:1px;background:#858386;"></div>
<div style="left:519px;top:713px;width:1px;height:14px;background:#858386;"></div>
<div style="left:519px;top:727px;width:35px;height:1px;background:#fdfdfd;"></div>
<div style="left:553px;top:713px;width:1px;height:15px;background:#fdfdfd;"></div>
<div style="left:555px;top:713px;width:131px;height:15px;background:#c3c1c4;"></div>
<div style="left:555px;top:713px;width:130px;height:1px;background:#858386;"></div>
<div style="left:555px;top:713px;width:1px;height:14px;background:#858386;"></div>
<div style="left:555px;top:727px;width:131px;height:1px;background:#fdfdfd;"></div>
<div style="left:685px;top:713px;width:1px;height:15px;background:#fdfdfd;"></div>
<div style="left:688px;top:713px;width:28px;height:15px;background:#c3c1c4;"></div>
<div style="left:688px;top:713px;width:27px;height:1px;background:#858386;"></div>
<div style="left:688px;top:713px;width:1px;height:14px;background:#858386;"></div>
<div style="left:688px;top:727px;width:28px;height:1px;background:#fdfdfd;"></div>
<div style="left:715px;top:713px;width:1px;height:15px;background:#fdfdfd;"></div>
<div style="left:718px;top:713px;width:35px;height:15px;background:#c3c1c4;"></div>
<div style="left:718px;top:713px;width:34px;height:1px;background:#858386;"></div>
<div style="left:718px;top:713px;width:1px;height:14px;background:#858386;"></div>
<div style="left:718px;top:727px;width:35px;height:1px;background:#fdfdfd;"></div>
<div style="left:752px;top:713px;width:1px;height:15px;background:#fdfdfd;"></div>
<div style="left:755px;top:713px;width:30px;height:15px;background:#c3c1c4;"></div>
<div style="left:755px;top:713px;width:29px;height:1px;background:#858386;"></div>
<div style="left:755px;top:713px;width:1px;height:14px;background:#858386;"></div>
<div style="left:755px;top:727px;width:30px;height:1px;background:#fdfdfd;"></div>
<div style="left:784px;top:713px;width:1px;height:15px;background:#fdfdfd;"></div>
<div style="left:787px;top:713px;width:34px;height:15px;background:#c3c1c4;"></div>
<div style="left:787px;top:713px;width:33px;height:1px;background:#858386;"></div>
<div style="left:787px;top:713px;width:1px;height:14px;background:#858386;"></div>
<div style="left:787px;top:727px;width:34px;height:1px;background:#fdfdfd;"></div>
<div style="left:820px;top:713px;width:1px;height:15px;background:#fdfdfd;"></div>
<div style="left:823px;top:713px;width:29px;height:15px;background:#c3c1c4;"></div>
<div style="left:823px;top:713px;width:28px;height:1px;background:#858386;"></div>
<div style="left:823px;top:713px;width:1px;height:14px;background:#858386;"></div>
<div style="left:823px;top:727px;width:29px;height:1px;background:#fdfdfd;"></div>
<div style="left:851px;top:713px;width:1px;height:15px;background:#fdfdfd;"></div>
<div style="left:854px;top:713px;width:24px;height:15px;background:#c3c1c4;"></div>
<div style="left:854px;top:713px;width:23px;height:1px;background:#858386;"></div>
<div style="left:854px;top:713px;width:1px;height:14px;background:#858386;"></div>
<div style="left:854px;top:727px;width:24px;height:1px;background:#fdfdfd;"></div>
<div style="left:877px;top:713px;width:1px;height:15px;background:#fdfdfd;"></div>
<span style="left:555.50px;top:713px;font:13px 'Liberation Sans',sans-serif;line-height:16px;height:16px;color:#050305;white-space:pre;letter-spacing:-0.073px;">Sum=525.032456</span>
<svg style="left:887px;top:716px" width="13" height="13" viewBox="0 0 13 13" shape-rendering="auto"><path d="M11.500 .500l-11 11M11.500 4.500l-7 7M11.500 8.500l-3 3" stroke="#fdfdfd"/><path d="M11.500 1.500l-10 10M11.500 2.500l-9 9M11.500 5.500l-6 6M11.500 6.500l-5 5M11.500 9.500l-2 2M11.500 10.500l-1 1" stroke="#858386"/></svg>
<div style="left:866px;top:614px;width:32px;height:64px;background:#fdfdfd;"></div>
<div style="left:866px;top:623px;width:32px;height:1px;background:#c3c1c4;"></div>
<div style="left:866px;top:640px;width:32px;height:1px;background:#c3c1c4;"></div>
<div style="left:866px;top:657px;width:32px;height:1px;background:#c3c1c4;"></div>
<div style="left:866px;top:674px;width:32px;height:1px;background:#c3c1c4;"></div>
<div style="left:866px;top:678px;width:32px;height:20px;background:#c3c1c4;"></div>
<div style="left:866px;top:694px;width:32px;height:1px;background:#fdfdfd;"></div>
<div style="left:866px;top:698px;width:32px;height:1px;background:#050305;"></div>
<div style="left:866px;top:699px;width:32px;height:9px;background:#858386;"></div>
<div style="left:174px;top:319px;width:692px;height:384px;background:#c3c1c4;"></div>
<div style="left:175px;top:320px;width:689px;height:1px;background:#fdfdfd;"></div>
<div style="left:175px;top:320px;width:1px;height:381px;background:#fdfdfd;"></div>
<div style="left:174px;top:702px;width:692px;height:1px;background:#050305;"></div>
<div style="left:865px;top:319px;width:1px;height:384px;background:#050305;"></div>
<div style="left:175px;top:701px;width:690px;height:1px;background:#858386;"></div>
<div style="left:864px;top:320px;width:1px;height:382px;background:#858386;"></div>
<div style="left:178px;top:322px;width:684px;height:18px;background:#04007e;"></div>
<svg style="left:180px;top:323px" width="16" height="16" viewBox="0 0 16 16" ><path d="M3.500 2.500h8l3 3v10h-11z" fill="#fff" stroke="#858386"/><path d="M11.500 2.500v3h3" fill="none" stroke="#858386"/>
<path d="M6 7.500h6M6 9.500h6M6 11.500h6M6 13.500h6M8.500 6v8M11.500 6v8" stroke="#c3c1c4" stroke-width=".9"/>
<path d="M0 1h3l6 6h-3z" fill="#000"/><path d="M6 1h3l-7 6h-2z" fill="#000"/><path d="M.8 1.500h2l5 5h-2z" fill="#00e0e0"/><path d="M6.500 1.500h2l-2.500 2-1-1zM.8 6.500l2.500-2.300 1 1-1.500 1.300z" fill="#00c0c0"/></svg>
<span style="left:198.00px;top:323px;font:bold 12px 'Liberation Sans',sans-serif;line-height:16px;height:16px;color:#fdfdfd;white-space:pre;letter-spacing:-0.793px;">log1</span>
<div style="left:178px;top:341px;width:684px;height:1px;background:#858386;"></div>
<div style="left:179px;top:342px;width:683px;height:1px;background:#050305;"></div>
<div style="left:178px;top:341px;width:1px;height:358px;background:#858386;"></div>
<div style="left:179px;top:342px;width:1px;height:357px;background:#050305;"></div>
<div style="left:179px;top:698px;width:683px;height:1px;background:#fdfdfd;"></div>
<div style="left:861px;top:342px;width:1px;height:357px;background:#fdfdfd;"></div>
<div style="left:180px;top:343px;width:665px;height:339px;background:#fdfdfd;"></div>
<div style="left:206px;top:359px;width:639px;height:1px;background:#c3c1c4;"></div>
<div style="left:206px;top:376px;width:639px;height:1px;background:#c3c1c4;"></div>
<div style="left:206px;top:393px;width:639px;height:1px;background:#c3c1c4;"></div>
<div style="left:206px;top:410px;width:639px;height:1px;background:#c3c1c4;"></div>
<div style="left:206px;top:427px;width:639px;height:1px;background:#c3c1c4;"></div>
<div style="left:206px;top:444px;width:639px;height:1px;background:#c3c1c4;"></div>
<div style="left:206px;top:461px;width:639px;height:1px;background:#c3c1c4;"></div>
<div style="left:206px;top:478px;width:639px;height:1px;background:#c3c1c4;"></div>
<div style="left:206px;top:495px;width:639px;height:1px;background:#c3c1c4;"></div>
<div style="left:206px;top:512px;width:639px;height:1px;background:#c3c1c4;"></div>
<div style="left:206px;top:529px;width:639px;height:1px;background:#c3c1c4;"></div>
<div style="left:206px;top:546px;width:639px;height:1px;background:#c3c1c4;"></div>
<div style="left:206px;top:563px;width:639px;height:1px;background:#c3c1c4;"></div>
<div style="left:206px;top:580px;width:639px;height:1px;background:#c3c1c4;"></div>
<div style="left:206px;top:597px;width:639px;height:1px;background:#c3c1c4;"></div>
<div style="left:206px;top:614px;width:639px;height:1px;background:#c3c1c4;"></div>
<div style="left:206px;top:631px;width:639px;height:1px;background:#c3c1c4;"></div>
<div style="left:206px;top:648px;width:639px;height:1px;background:#c3c1c4;"></div>
<div style="left:206px;top:665px;width:639px;height:1px;background:#c3c1c4;"></div>
<div style="left:206px;top:682px;width:639px;height:1px;background:#c3c1c4;"></div>
<div style="left:269px;top:359px;width:1px;height:323px;background:#c3c1c4;"></div>
<div style="left:333px;top:359px;width:1px;height:323px;background:#c3c1c4;"></div>
<div style="left:397px;top:359px;width:1px;height:323px;background:#c3c1c4;"></div>
<div style="left:461px;top:359px;width:1px;height:323px;background:#c3c1c4;"></div>
<div style="left:525px;top:359px;width:1px;height:323px;background:#c3c1c4;"></div>
<div style="left:589px;top:359px;width:1px;height:323px;background:#c3c1c4;"></div>
<div style="left:653px;top:359px;width:1px;height:323px;background:#c3c1c4;"></div>
<div style="left:717px;top:359px;width:1px;height:323px;background:#c3c1c4;"></div>
<div style="left:781px;top:359px;width:1px;height:323px;background:#c3c1c4;"></div>
<div style="left:845px;top:359px;width:1px;height:323px;background:#c3c1c4;"></div>
<div style="left:180px;top:343px;width:26px;height:17px;background:#c3c1c4;"></div>
<div style="left:180px;top:343px;width:25px;height:1px;background:#fdfdfd;"></div>
<div style="left:180px;top:343px;width:1px;height:16px;background:#fdfdfd;"></div>
<div style="left:180px;top:359px;width:26px;height:1px;background:#858386;"></div>
<div style="left:205px;top:343px;width:1px;height:17px;background:#858386;"></div>
<div style="left:206px;top:343px;width:64px;height:17px;background:#858386;"></div>
<div style="left:206px;top:343px;width:64px;height:1px;background:#050305;"></div>
<div style="left:206px;top:343px;width:1px;height:17px;background:#fdfdfd;"></div>
<div style="left:269px;top:343px;width:1px;height:17px;background:#fdfdfd;"></div>
<div style="left:206px;top:358px;width:64px;height:1px;background:#fdfdfd;"></div>
<div style="left:206px;top:359px;width:64px;height:1px;background:#e4e4e4;"></div>
<span style="left:232.75px;top:344px;font:bold 13px 'Liberation Sans',sans-serif;line-height:16px;height:16px;color:#fdfdfd;white-space:pre;letter-spacing:0.109px;">A</span>
<div style="left:270px;top:343px;width:64px;height:17px;background:#c3c1c4;"></div>
<div style="left:270px;top:343px;width:63px;height:1px;background:#fdfdfd;"></div>
<div style="left:270px;top:343px;width:1px;height:16px;background:#fdfdfd;"></div>
<div style="left:270px;top:359px;width:64px;height:1px;background:#858386;"></div>
<div style="left:333px;top:343px;width:1px;height:17px;background:#858386;"></div>
<span style="left:297.00px;top:344px;font:13px 'Liberation Sans',sans-serif;line-height:16px;height:16px;color:#050305;white-space:pre;letter-spacing:0.328px;">B</span>
<div style="left:334px;top:343px;width:64px;height:17px;background:#c3c1c4;"></div>
<div style="left:334px;top:343px;width:63px;height:1px;background:#fdfdfd;"></div>
<div style="left:334px;top:343px;width:1px;height:16px;background:#fdfdfd;"></div>
<div style="left:334px;top:359px;width:64px;height:1px;background:#858386;"></div>
<div style="left:397px;top:343px;width:1px;height:17px;background:#858386;"></div>
<span style="left:361.00px;top:344px;font:13px 'Liberation Sans',sans-serif;line-height:16px;height:16px;color:#050305;white-space:pre;letter-spacing:-0.391px;">C</span>
<div style="left:398px;top:343px;width:64px;height:17px;background:#858386;"></div>
<div style="left:398px;top:343px;width:64px;height:1px;background:#050305;"></div>
<div style="left:398px;top:343px;width:1px;height:17px;background:#050305;"></div>
<div style="left:461px;top:343px;width:1px;height:17px;background:#fdfdfd;"></div>
<div style="left:398px;top:358px;width:64px;height:1px;background:#fdfdfd;"></div>
<div style="left:398px;top:359px;width:64px;height:1px;background:#e4e4e4;"></div>
<span style="left:424.75px;top:344px;font:bold 13px 'Liberation Sans',sans-serif;line-height:16px;height:16px;color:#fdfdfd;white-space:pre;letter-spacing:0.109px;">D</span>
<div style="left:462px;top:343px;width:64px;height:17px;background:#c3c1c4;"></div>
<div style="left:462px;top:343px;width:63px;height:1px;background:#fdfdfd;"></div>
<div style="left:462px;top:343px;width:1px;height:16px;background:#fdfdfd;"></div>
<div style="left:462px;top:359px;width:64px;height:1px;background:#858386;"></div>
<div style="left:525px;top:343px;width:1px;height:17px;background:#858386;"></div>
<span style="left:489.00px;top:344px;font:13px 'Liberation Sans',sans-serif;line-height:16px;height:16px;color:#050305;white-space:pre;letter-spacing:0.328px;">E</span>
<div style="left:526px;top:343px;width:64px;height:17px;background:#c3c1c4;"></div>
<div style="left:526px;top:343px;width:63px;height:1px;background:#fdfdfd;"></div>
<div style="left:526px;top:343px;width:1px;height:16px;background:#fdfdfd;"></div>
<div style="left:526px;top:359px;width:64px;height:1px;background:#858386;"></div>
<div style="left:589px;top:343px;width:1px;height:17px;background:#858386;"></div>
<span style="left:553.00px;top:344px;font:13px 'Liberation Sans',sans-serif;line-height:16px;height:16px;color:#050305;white-space:pre;letter-spacing:1.047px;">F</span>
<div style="left:590px;top:343px;width:64px;height:17px;background:#c3c1c4;"></div>
<div style="left:590px;top:343px;width:63px;height:1px;background:#fdfdfd;"></div>
<div style="left:590px;top:343px;width:1px;height:16px;background:#fdfdfd;"></div>
<div style="left:590px;top:359px;width:64px;height:1px;background:#858386;"></div>
<div style="left:653px;top:343px;width:1px;height:17px;background:#858386;"></div>
<span style="left:617.00px;top:344px;font:13px 'Liberation Sans',sans-serif;line-height:16px;height:16px;color:#050305;white-space:pre;letter-spacing:-1.125px;">G</span>
<div style="left:654px;top:343px;width:64px;height:17px;background:#c3c1c4;"></div>
<div style="left:654px;top:343px;width:63px;height:1px;background:#fdfdfd;"></div>
<div style="left:654px;top:343px;width:1px;height:16px;background:#fdfdfd;"></div>
<div style="left:654px;top:359px;width:64px;height:1px;background:#858386;"></div>
<div style="left:717px;top:343px;width:1px;height:17px;background:#858386;"></div>
<span style="left:681.00px;top:344px;font:13px 'Liberation Sans',sans-serif;line-height:16px;height:16px;color:#050305;white-space:pre;letter-spacing:-0.391px;">H</span>
<div style="left:718px;top:343px;width:64px;height:17px;background:#c3c1c4;"></div>
<div style="left:718px;top:343px;width:63px;height:1px;background:#fdfdfd;"></div>
<div style="left:718px;top:343px;width:1px;height:16px;background:#fdfdfd;"></div>
<div style="left:718px;top:359px;width:64px;height:1px;background:#858386;"></div>
<div style="left:781px;top:343px;width:1px;height:17px;background:#858386;"></div>
<span style="left:745.00px;top:344px;font:13px 'Liberation Sans',sans-serif;line-height:16px;height:16px;color:#050305;white-space:pre;letter-spacing:5.375px;">I</span>
<div style="left:782px;top:343px;width:64px;height:17px;background:#c3c1c4;"></div>
<div style="left:782px;top:343px;width:63px;height:1px;background:#fdfdfd;"></div>
<div style="left:782px;top:343px;width:1px;height:16px;background:#fdfdfd;"></div>
<div style="left:782px;top:359px;width:64px;height:1px;background:#858386;"></div>
<div style="left:845px;top:343px;width:1px;height:17px;background:#858386;"></div>
<span style="left:809.00px;top:344px;font:13px 'Liberation Sans',sans-serif;line-height:16px;height:16px;color:#050305;white-space:pre;letter-spacing:2.500px;">J</span>
<div style="left:180px;top:360px;width:26px;height:17px;background:#c3c1c4;"></div>
<div style="left:180px;top:360px;width:25px;height:1px;background:#fdfdfd;"></div>
<div style="left:180px;top:360px;width:1px;height:16px;background:#fdfdfd;"></div>
<div style="left:180px;top:376px;width:26px;height:1px;background:#858386;"></div>
<div style="left:205px;top:360px;width:1px;height:17px;background:#858386;"></div>
<span style="left:189.40px;top:361px;font:bold 13px 'Liberation Sans',sans-serif;line-height:16px;height:16px;color:#050305;white-space:pre;letter-spacing:-0.034px;">1</span>
<div style="left:180px;top:377px;width:26px;height:17px;background:#c3c1c4;"></div>
<div style="left:180px;top:377px;width:25px;height:1px;background:#fdfdfd;"></div>
<div style="left:180px;top:377px;width:1px;height:16px;background:#fdfdfd;"></div>
<div style="left:180px;top:393px;width:26px;height:1px;background:#858386;"></div>
<div style="left:205px;top:377px;width:1px;height:17px;background:#858386;"></div>
<span style="left:189.40px;top:378px;font:bold 13px 'Liberation Sans',sans-serif;line-height:16px;height:16px;color:#050305;white-space:pre;letter-spacing:-0.034px;">2</span>
<div style="left:180px;top:394px;width:26px;height:17px;background:#c3c1c4;"></div>
<div style="left:180px;top:394px;width:25px;height:1px;background:#fdfdfd;"></div>
<div style="left:180px;top:394px;width:1px;height:16px;background:#fdfdfd;"></div>
<div style="left:180px;top:410px;width:26px;height:1px;background:#858386;"></div>
<div style="left:205px;top:394px;width:1px;height:17px;background:#858386;"></div>
<span style="left:189.40px;top:395px;font:bold 13px 'Liberation Sans',sans-serif;line-height:16px;height:16px;color:#050305;white-space:pre;letter-spacing:-0.034px;">3</span>
<div style="left:180px;top:411px;width:26px;height:17px;background:#c3c1c4;"></div>
<div style="left:180px;top:411px;width:25px;height:1px;background:#fdfdfd;"></div>
<div style="left:180px;top:411px;width:1px;height:16px;background:#fdfdfd;"></div>
<div style="left:180px;top:427px;width:26px;height:1px;background:#858386;"></div>
<div style="left:205px;top:411px;width:1px;height:17px;background:#858386;"></div>
<span style="left:189.40px;top:412px;font:bold 13px 'Liberation Sans',sans-serif;line-height:16px;height:16px;color:#050305;white-space:pre;letter-spacing:-0.034px;">4</span>
<div style="left:180px;top:428px;width:26px;height:17px;background:#c3c1c4;"></div>
<div style="left:180px;top:428px;width:25px;height:1px;background:#fdfdfd;"></div>
<div style="left:180px;top:428px;width:1px;height:16px;background:#fdfdfd;"></div>
<div style="left:180px;top:444px;width:26px;height:1px;background:#858386;"></div>
<div style="left:205px;top:428px;width:1px;height:17px;background:#858386;"></div>
<span style="left:189.40px;top:429px;font:bold 13px 'Liberation Sans',sans-serif;line-height:16px;height:16px;color:#050305;white-space:pre;letter-spacing:-0.034px;">5</span>
<div style="left:180px;top:445px;width:26px;height:17px;background:#c3c1c4;"></div>
<div style="left:180px;top:445px;width:25px;height:1px;background:#fdfdfd;"></div>
<div style="left:180px;top:445px;width:1px;height:16px;background:#fdfdfd;"></div>
<div style="left:180px;top:461px;width:26px;height:1px;background:#858386;"></div>
<div style="left:205px;top:445px;width:1px;height:17px;background:#858386;"></div>
<span style="left:189.40px;top:446px;font:bold 13px 'Liberation Sans',sans-serif;line-height:16px;height:16px;color:#050305;white-space:pre;letter-spacing:-0.034px;">6</span>
<div style="left:180px;top:462px;width:26px;height:17px;background:#c3c1c4;"></div>
<div style="left:180px;top:462px;width:25px;height:1px;background:#fdfdfd;"></div>
<div style="left:180px;top:462px;width:1px;height:16px;background:#fdfdfd;"></div>
<div style="left:180px;top:478px;width:26px;height:1px;background:#858386;"></div>
<div style="left:205px;top:462px;width:1px;height:17px;background:#858386;"></div>
<span style="left:189.40px;top:463px;font:bold 13px 'Liberation Sans',sans-serif;line-height:16px;height:16px;color:#050305;white-space:pre;letter-spacing:-0.034px;">7</span>
<div style="left:180px;top:479px;width:26px;height:17px;background:#c3c1c4;"></div>
<div style="left:180px;top:479px;width:25px;height:1px;background:#fdfdfd;"></div>
<div style="left:180px;top:479px;width:1px;height:16px;background:#fdfdfd;"></div>
<div style="left:180px;top:495px;width:26px;height:1px;background:#858386;"></div>
<div style="left:205px;top:479px;width:1px;height:17px;background:#858386;"></div>
<span style="left:189.40px;top:480px;font:bold 13px 'Liberation Sans',sans-serif;line-height:16px;height:16px;color:#050305;white-space:pre;letter-spacing:-0.034px;">8</span>
<div style="left:180px;top:496px;width:26px;height:17px;background:#c3c1c4;"></div>
<div style="left:180px;top:496px;width:25px;height:1px;background:#fdfdfd;"></div>
<div style="left:180px;top:496px;width:1px;height:16px;background:#fdfdfd;"></div>
<div style="left:180px;top:512px;width:26px;height:1px;background:#858386;"></div>
<div style="left:205px;top:496px;width:1px;height:17px;background:#858386;"></div>
<span style="left:189.40px;top:497px;font:bold 13px 'Liberation Sans',sans-serif;line-height:16px;height:16px;color:#050305;white-space:pre;letter-spacing:-0.034px;">9</span>
<div style="left:180px;top:513px;width:26px;height:17px;background:#c3c1c4;"></div>
<div style="left:180px;top:513px;width:25px;height:1px;background:#fdfdfd;"></div>
<div style="left:180px;top:513px;width:1px;height:16px;background:#fdfdfd;"></div>
<div style="left:180px;top:529px;width:26px;height:1px;background:#858386;"></div>
<div style="left:205px;top:513px;width:1px;height:17px;background:#858386;"></div>
<span style="left:185.80px;top:514px;font:bold 13px 'Liberation Sans',sans-serif;line-height:16px;height:16px;color:#050305;white-space:pre;letter-spacing:-0.034px;">10</span>
<div style="left:180px;top:530px;width:26px;height:17px;background:#c3c1c4;"></div>
<div style="left:180px;top:530px;width:25px;height:1px;background:#fdfdfd;"></div>
<div style="left:180px;top:530px;width:1px;height:16px;background:#fdfdfd;"></div>
<div style="left:180px;top:546px;width:26px;height:1px;background:#858386;"></div>
<div style="left:205px;top:530px;width:1px;height:17px;background:#858386;"></div>
<span style="left:185.80px;top:531px;font:bold 13px 'Liberation Sans',sans-serif;line-height:16px;height:16px;color:#050305;white-space:pre;letter-spacing:0.325px;">11</span>
<div style="left:180px;top:547px;width:26px;height:17px;background:#c3c1c4;"></div>
<div style="left:180px;top:547px;width:25px;height:1px;background:#fdfdfd;"></div>
<div style="left:180px;top:547px;width:1px;height:16px;background:#fdfdfd;"></div>
<div style="left:180px;top:563px;width:26px;height:1px;background:#858386;"></div>
<div style="left:205px;top:547px;width:1px;height:17px;background:#858386;"></div>
<span style="left:185.80px;top:548px;font:bold 13px 'Liberation Sans',sans-serif;line-height:16px;height:16px;color:#050305;white-space:pre;letter-spacing:-0.034px;">12</span>
<div style="left:180px;top:564px;width:26px;height:17px;background:#c3c1c4;"></div>
<div style="left:180px;top:564px;width:25px;height:1px;background:#fdfdfd;"></div>
<div style="left:180px;top:564px;width:1px;height:16px;background:#fdfdfd;"></div>
<div style="left:180px;top:580px;width:26px;height:1px;background:#858386;"></div>
<div style="left:205px;top:564px;width:1px;height:17px;background:#858386;"></div>
<span style="left:185.80px;top:565px;font:bold 13px 'Liberation Sans',sans-serif;line-height:16px;height:16px;color:#050305;white-space:pre;letter-spacing:-0.034px;">13</span>
<div style="left:180px;top:581px;width:26px;height:17px;background:#c3c1c4;"></div>
<div style="left:180px;top:581px;width:25px;height:1px;background:#fdfdfd;"></div>
<div style="left:180px;top:581px;width:1px;height:16px;background:#fdfdfd;"></div>
<div style="left:180px;top:597px;width:26px;height:1px;background:#858386;"></div>
<div style="left:205px;top:581px;width:1px;height:17px;background:#858386;"></div>
<span style="left:185.80px;top:582px;font:bold 13px 'Liberation Sans',sans-serif;line-height:16px;height:16px;color:#050305;white-space:pre;letter-spacing:-0.034px;">14</span>
<div style="left:180px;top:598px;width:26px;height:17px;background:#c3c1c4;"></div>
<div style="left:180px;top:598px;width:25px;height:1px;background:#fdfdfd;"></div>
<div style="left:180px;top:598px;width:1px;height:16px;background:#fdfdfd;"></div>
<div style="left:180px;top:614px;width:26px;height:1px;background:#858386;"></div>
<div style="left:205px;top:598px;width:1px;height:17px;background:#858386;"></div>
<span style="left:185.80px;top:599px;font:bold 13px 'Liberation Sans',sans-serif;line-height:16px;height:16px;color:#050305;white-space:pre;letter-spacing:-0.034px;">15</span>
<div style="left:180px;top:615px;width:26px;height:17px;background:#c3c1c4;"></div>
<div style="left:180px;top:615px;width:25px;height:1px;background:#fdfdfd;"></div>
<div style="left:180px;top:615px;width:1px;height:16px;background:#fdfdfd;"></div>
<div style="left:180px;top:631px;width:26px;height:1px;background:#858386;"></div>
<div style="left:205px;top:615px;width:1px;height:17px;background:#858386;"></div>
<span style="left:185.80px;top:616px;font:bold 13px 'Liberation Sans',sans-serif;line-height:16px;height:16px;color:#050305;white-space:pre;letter-spacing:-0.034px;">16</span>
<div style="left:180px;top:632px;width:26px;height:17px;background:#c3c1c4;"></div>
<div style="left:180px;top:632px;width:25px;height:1px;background:#fdfdfd;"></div>
<div style="left:180px;top:632px;width:1px;height:16px;background:#fdfdfd;"></div>
<div style="left:180px;top:648px;width:26px;height:1px;background:#858386;"></div>
<div style="left:205px;top:632px;width:1px;height:17px;background:#858386;"></div>
<span style="left:185.80px;top:633px;font:bold 13px 'Liberation Sans',sans-serif;line-height:16px;height:16px;color:#050305;white-space:pre;letter-spacing:-0.034px;">17</span>
<div style="left:180px;top:649px;width:26px;height:17px;background:#c3c1c4;"></div>
<div style="left:180px;top:649px;width:25px;height:1px;background:#fdfdfd;"></div>
<div style="left:180px;top:649px;width:1px;height:16px;background:#fdfdfd;"></div>
<div style="left:180px;top:665px;width:26px;height:1px;background:#858386;"></div>
<div style="left:205px;top:649px;width:1px;height:17px;background:#858386;"></div>
<span style="left:185.80px;top:650px;font:bold 13px 'Liberation Sans',sans-serif;line-height:16px;height:16px;color:#050305;white-space:pre;letter-spacing:-0.034px;">18</span>
<div style="left:180px;top:666px;width:26px;height:17px;background:#c3c1c4;"></div>
<div style="left:180px;top:666px;width:25px;height:1px;background:#fdfdfd;"></div>
<div style="left:180px;top:666px;width:1px;height:16px;background:#fdfdfd;"></div>
<div style="left:180px;top:682px;width:26px;height:1px;background:#858386;"></div>
<div style="left:205px;top:666px;width:1px;height:17px;background:#858386;"></div>
<span style="left:185.80px;top:667px;font:bold 13px 'Liberation Sans',sans-serif;line-height:16px;height:16px;color:#050305;white-space:pre;letter-spacing:-0.034px;">19</span>
<div style="left:207px;top:361px;width:62px;height:321px;background:#050305;"></div>
<div style="left:207px;top:376px;width:62px;height:1px;background:#6a686b;"></div>
<div style="left:207px;top:393px;width:62px;height:1px;background:#6a686b;"></div>
<div style="left:207px;top:410px;width:62px;height:1px;background:#6a686b;"></div>
<div style="left:207px;top:427px;width:62px;height:1px;background:#6a686b;"></div>
<div style="left:207px;top:444px;width:62px;height:1px;background:#6a686b;"></div>
<div style="left:207px;top:461px;width:62px;height:1px;background:#6a686b;"></div>
<div style="left:207px;top:478px;width:62px;height:1px;background:#6a686b;"></div>
<div style="left:207px;top:495px;width:62px;height:1px;background:#6a686b;"></div>
<div style="left:207px;top:512px;width:62px;height:1px;background:#6a686b;"></div>
<div style="left:207px;top:529px;width:62px;height:1px;background:#6a686b;"></div>
<div style="left:207px;top:546px;width:62px;height:1px;background:#6a686b;"></div>
<div style="left:207px;top:563px;width:62px;height:1px;background:#6a686b;"></div>
<div style="left:207px;top:580px;width:62px;height:1px;background:#6a686b;"></div>
<div style="left:207px;top:597px;width:62px;height:1px;background:#6a686b;"></div>
<div style="left:207px;top:614px;width:62px;height:1px;background:#6a686b;"></div>
<div style="left:207px;top:631px;width:62px;height:1px;background:#6a686b;"></div>
<div style="left:207px;top:648px;width:62px;height:1px;background:#6a686b;"></div>
<div style="left:207px;top:665px;width:62px;height:1px;background:#6a686b;"></div>
<div style="left:207px;top:682px;width:62px;height:1px;background:#050305;"></div>
<div style="left:399px;top:361px;width:62px;height:321px;background:#050305;"></div>
<div style="left:399px;top:376px;width:62px;height:1px;background:#6a686b;"></div>
<div style="left:399px;top:393px;width:62px;height:1px;background:#6a686b;"></div>
<div style="left:399px;top:410px;width:62px;height:1px;background:#6a686b;"></div>
<div style="left:399px;top:427px;width:62px;height:1px;background:#6a686b;"></div>
<div style="left:399px;top:444px;width:62px;height:1px;background:#6a686b;"></div>
<div style="left:399px;top:461px;width:62px;height:1px;background:#6a686b;"></div>
<div style="left:399px;top:478px;width:62px;height:1px;background:#6a686b;"></div>
<div style="left:399px;top:495px;width:62px;height:1px;background:#6a686b;"></div>
<div style="left:399px;top:512px;width:62px;height:1px;background:#6a686b;"></div>
<div style="left:399px;top:529px;width:62px;height:1px;background:#6a686b;"></div>
<div style="left:399px;top:546px;width:62px;height:1px;background:#6a686b;"></div>
<div style="left:399px;top:563px;width:62px;height:1px;background:#6a686b;"></div>
<div style="left:399px;top:580px;width:62px;height:1px;background:#6a686b;"></div>
<div style="left:399px;top:597px;width:62px;height:1px;background:#6a686b;"></div>
<div style="left:399px;top:614px;width:62px;height:1px;background:#6a686b;"></div>
<div style="left:399px;top:631px;width:62px;height:1px;background:#6a686b;"></div>
<div style="left:399px;top:648px;width:62px;height:1px;background:#6a686b;"></div>
<div style="left:399px;top:665px;width:62px;height:1px;background:#6a686b;"></div>
<div style="left:399px;top:682px;width:62px;height:1px;background:#050305;"></div>
<span style="left:260.20px;top:361px;font:13px 'Liberation Sans',sans-serif;line-height:16px;height:16px;color:#fdfdfd;white-space:pre;letter-spacing:0.066px;">0</span>
<span style="left:324.00px;top:361px;font:13px 'Liberation Sans',sans-serif;line-height:16px;height:16px;color:#050305;white-space:pre;letter-spacing:0.066px;">0</span>
<span style="left:341.30px;top:361px;font:13px 'Liberation Sans',sans-serif;line-height:16px;height:16px;color:#050305;white-space:pre;letter-spacing:-0.117px;">0.000000</span>
<span style="left:472.80px;top:361px;font:13px 'Liberation Sans',sans-serif;line-height:16px;height:16px;color:#050305;white-space:pre;letter-spacing:-0.499px;">-5.8091</span>
<span style="left:260.20px;top:378px;font:13px 'Liberation Sans',sans-serif;line-height:16px;height:16px;color:#fdfdfd;white-space:pre;letter-spacing:0.066px;">5</span>
<span style="left:278.00px;top:378px;font:13px 'Liberation Sans',sans-serif;line-height:16px;height:16px;color:#050305;white-space:pre;letter-spacing:-0.117px;">0.036578</span>
<span style="left:341.30px;top:378px;font:13px 'Liberation Sans',sans-serif;line-height:16px;height:16px;color:#050305;white-space:pre;letter-spacing:-0.117px;">0.000146</span>
<span style="left:405.20px;top:378px;font:13px 'Liberation Sans',sans-serif;line-height:16px;height:16px;color:#fdfdfd;white-space:pre;letter-spacing:-0.117px;">0.002854</span>
<span style="left:472.80px;top:378px;font:13px 'Liberation Sans',sans-serif;line-height:16px;height:16px;color:#050305;white-space:pre;letter-spacing:-0.499px;">-5.8591</span>
<span style="left:253.20px;top:395px;font:13px 'Liberation Sans',sans-serif;line-height:16px;height:16px;color:#fdfdfd;white-space:pre;letter-spacing:-0.084px;">10</span>
<span style="left:278.00px;top:395px;font:13px 'Liberation Sans',sans-serif;line-height:16px;height:16px;color:#050305;white-space:pre;letter-spacing:-0.117px;">0.071372</span>
<span style="left:341.30px;top:395px;font:13px 'Liberation Sans',sans-serif;line-height:16px;height:16px;color:#050305;white-space:pre;letter-spacing:-0.117px;">0.000285</span>
<span style="left:405.20px;top:395px;font:13px 'Liberation Sans',sans-serif;line-height:16px;height:16px;color:#fdfdfd;white-space:pre;letter-spacing:-0.117px;">0.002715</span>
<span style="left:472.80px;top:395px;font:13px 'Liberation Sans',sans-serif;line-height:16px;height:16px;color:#050305;white-space:pre;letter-spacing:-0.499px;">-5.9091</span>
<span style="left:253.20px;top:412px;font:13px 'Liberation Sans',sans-serif;line-height:16px;height:16px;color:#fdfdfd;white-space:pre;letter-spacing:-0.084px;">15</span>
<span style="left:278.00px;top:412px;font:13px 'Liberation Sans',sans-serif;line-height:16px;height:16px;color:#050305;white-space:pre;letter-spacing:-0.117px;">0.104469</span>
<span style="left:341.30px;top:412px;font:13px 'Liberation Sans',sans-serif;line-height:16px;height:16px;color:#050305;white-space:pre;letter-spacing:-0.117px;">0.000418</span>
<span style="left:405.20px;top:412px;font:13px 'Liberation Sans',sans-serif;line-height:16px;height:16px;color:#fdfdfd;white-space:pre;letter-spacing:-0.117px;">0.002582</span>
<span style="left:472.80px;top:412px;font:13px 'Liberation Sans',sans-serif;line-height:16px;height:16px;color:#050305;white-space:pre;letter-spacing:-0.499px;">-5.9591</span>
<span style="left:253.20px;top:429px;font:13px 'Liberation Sans',sans-serif;line-height:16px;height:16px;color:#fdfdfd;white-space:pre;letter-spacing:-0.084px;">20</span>
<span style="left:278.00px;top:429px;font:13px 'Liberation Sans',sans-serif;line-height:16px;height:16px;color:#050305;white-space:pre;letter-spacing:-0.117px;">0.135952</span>
<span style="left:341.30px;top:429px;font:13px 'Liberation Sans',sans-serif;line-height:16px;height:16px;color:#050305;white-space:pre;letter-spacing:-0.117px;">0.000544</span>
<span style="left:405.20px;top:429px;font:13px 'Liberation Sans',sans-serif;line-height:16px;height:16px;color:#fdfdfd;white-space:pre;letter-spacing:-0.117px;">0.002456</span>
<span style="left:472.80px;top:429px;font:13px 'Liberation Sans',sans-serif;line-height:16px;height:16px;color:#050305;white-space:pre;letter-spacing:-0.499px;">-6.0091</span>
<span style="left:253.20px;top:446px;font:13px 'Liberation Sans',sans-serif;line-height:16px;height:16px;color:#fdfdfd;white-space:pre;letter-spacing:-0.084px;">25</span>
<span style="left:278.00px;top:446px;font:13px 'Liberation Sans',sans-serif;line-height:16px;height:16px;color:#050305;white-space:pre;letter-spacing:-0.117px;">0.165899</span>
<span style="left:341.30px;top:446px;font:13px 'Liberation Sans',sans-serif;line-height:16px;height:16px;color:#050305;white-space:pre;letter-spacing:-0.117px;">0.000664</span>
<span style="left:405.20px;top:446px;font:13px 'Liberation Sans',sans-serif;line-height:16px;height:16px;color:#fdfdfd;white-space:pre;letter-spacing:-0.117px;">0.002336</span>
<span style="left:472.80px;top:446px;font:13px 'Liberation Sans',sans-serif;line-height:16px;height:16px;color:#050305;white-space:pre;letter-spacing:-0.499px;">-6.0591</span>
<span style="left:253.20px;top:463px;font:13px 'Liberation Sans',sans-serif;line-height:16px;height:16px;color:#fdfdfd;white-space:pre;letter-spacing:-0.084px;">30</span>
<span style="left:278.00px;top:463px;font:13px 'Liberation Sans',sans-serif;line-height:16px;height:16px;color:#050305;white-space:pre;letter-spacing:-0.117px;">0.194386</span>
<span style="left:341.30px;top:463px;font:13px 'Liberation Sans',sans-serif;line-height:16px;height:16px;color:#050305;white-space:pre;letter-spacing:-0.117px;">0.000778</span>
<span style="left:405.20px;top:463px;font:13px 'Liberation Sans',sans-serif;line-height:16px;height:16px;color:#fdfdfd;white-space:pre;letter-spacing:-0.117px;">0.002222</span>
<span style="left:472.80px;top:463px;font:13px 'Liberation Sans',sans-serif;line-height:16px;height:16px;color:#050305;white-space:pre;letter-spacing:-0.499px;">-6.1091</span>
<span style="left:253.20px;top:480px;font:13px 'Liberation Sans',sans-serif;line-height:16px;height:16px;color:#fdfdfd;white-space:pre;letter-spacing:-0.084px;">35</span>
<span style="left:278.00px;top:480px;font:13px 'Liberation Sans',sans-serif;line-height:16px;height:16px;color:#050305;white-space:pre;letter-spacing:-0.117px;">0.221484</span>
<span style="left:341.30px;top:480px;font:13px 'Liberation Sans',sans-serif;line-height:16px;height:16px;color:#050305;white-space:pre;letter-spacing:-0.117px;">0.000886</span>
<span style="left:405.20px;top:480px;font:13px 'Liberation Sans',sans-serif;line-height:16px;height:16px;color:#fdfdfd;white-space:pre;letter-spacing:0.004px;">0.002114</span>
<span style="left:472.80px;top:480px;font:13px 'Liberation Sans',sans-serif;line-height:16px;height:16px;color:#050305;white-space:pre;letter-spacing:-0.499px;">-6.1591</span>
<span style="left:253.20px;top:497px;font:13px 'Liberation Sans',sans-serif;line-height:16px;height:16px;color:#fdfdfd;white-space:pre;letter-spacing:-0.084px;">40</span>
<span style="left:285.00px;top:497px;font:13px 'Liberation Sans',sans-serif;line-height:16px;height:16px;color:#050305;white-space:pre;letter-spacing:-0.100px;">0.24726</span>
<span style="left:341.30px;top:497px;font:13px 'Liberation Sans',sans-serif;line-height:16px;height:16px;color:#050305;white-space:pre;letter-spacing:-0.117px;">0.000989</span>
<span style="left:405.20px;top:497px;font:13px 'Liberation Sans',sans-serif;line-height:16px;height:16px;color:#fdfdfd;white-space:pre;letter-spacing:0.004px;">0.002011</span>
<span style="left:472.80px;top:497px;font:13px 'Liberation Sans',sans-serif;line-height:16px;height:16px;color:#050305;white-space:pre;letter-spacing:-0.499px;">-6.2091</span>
<span style="left:253.20px;top:514px;font:13px 'Liberation Sans',sans-serif;line-height:16px;height:16px;color:#fdfdfd;white-space:pre;letter-spacing:-0.084px;">45</span>
<span style="left:278.00px;top:514px;font:13px 'Liberation Sans',sans-serif;line-height:16px;height:16px;color:#050305;white-space:pre;letter-spacing:-0.117px;">0.271779</span>
<span style="left:341.30px;top:514px;font:13px 'Liberation Sans',sans-serif;line-height:16px;height:16px;color:#050305;white-space:pre;letter-spacing:-0.117px;">0.001087</span>
<span style="left:405.20px;top:514px;font:13px 'Liberation Sans',sans-serif;line-height:16px;height:16px;color:#fdfdfd;white-space:pre;letter-spacing:-0.117px;">0.001913</span>
<span style="left:472.80px;top:514px;font:13px 'Liberation Sans',sans-serif;line-height:16px;height:16px;color:#050305;white-space:pre;letter-spacing:-0.499px;">-6.2591</span>
<span style="left:253.20px;top:531px;font:13px 'Liberation Sans',sans-serif;line-height:16px;height:16px;color:#fdfdfd;white-space:pre;letter-spacing:-0.084px;">50</span>
<span style="left:278.00px;top:531px;font:13px 'Liberation Sans',sans-serif;line-height:16px;height:16px;color:#050305;white-space:pre;letter-spacing:-0.117px;">0.295102</span>
<span style="left:341.30px;top:531px;font:13px 'Liberation Sans',sans-serif;line-height:16px;height:16px;color:#050305;white-space:pre;letter-spacing:0.004px;">0.001180</span>
<span style="left:405.20px;top:531px;font:13px 'Liberation Sans',sans-serif;line-height:16px;height:16px;color:#fdfdfd;white-space:pre;letter-spacing:-0.117px;">0.001820</span>
<span style="left:472.80px;top:531px;font:13px 'Liberation Sans',sans-serif;line-height:16px;height:16px;color:#050305;white-space:pre;letter-spacing:-0.499px;">-6.3091</span>
<span style="left:253.20px;top:548px;font:13px 'Liberation Sans',sans-serif;line-height:16px;height:16px;color:#fdfdfd;white-space:pre;letter-spacing:-0.084px;">55</span>
<span style="left:278.00px;top:548px;font:13px 'Liberation Sans',sans-serif;line-height:16px;height:16px;color:#050305;white-space:pre;letter-spacing:-0.117px;">0.317288</span>
<span style="left:341.30px;top:548px;font:13px 'Liberation Sans',sans-serif;line-height:16px;height:16px;color:#050305;white-space:pre;letter-spacing:-0.117px;">0.001269</span>
<span style="left:405.20px;top:548px;font:13px 'Liberation Sans',sans-serif;line-height:16px;height:16px;color:#fdfdfd;white-space:pre;letter-spacing:-0.117px;">0.001731</span>
<span style="left:472.80px;top:548px;font:13px 'Liberation Sans',sans-serif;line-height:16px;height:16px;color:#050305;white-space:pre;letter-spacing:-0.499px;">-6.3591</span>
<span style="left:253.20px;top:565px;font:13px 'Liberation Sans',sans-serif;line-height:16px;height:16px;color:#fdfdfd;white-space:pre;letter-spacing:-0.084px;">60</span>
<span style="left:278.00px;top:565px;font:13px 'Liberation Sans',sans-serif;line-height:16px;height:16px;color:#050305;white-space:pre;letter-spacing:-0.117px;">0.338391</span>
<span style="left:341.30px;top:565px;font:13px 'Liberation Sans',sans-serif;line-height:16px;height:16px;color:#050305;white-space:pre;letter-spacing:-0.117px;">0.001354</span>
<span style="left:405.20px;top:565px;font:13px 'Liberation Sans',sans-serif;line-height:16px;height:16px;color:#fdfdfd;white-space:pre;letter-spacing:-0.117px;">0.001646</span>
<span style="left:472.80px;top:565px;font:13px 'Liberation Sans',sans-serif;line-height:16px;height:16px;color:#050305;white-space:pre;letter-spacing:-0.499px;">-6.4091</span>
<span style="left:253.20px;top:582px;font:13px 'Liberation Sans',sans-serif;line-height:16px;height:16px;color:#fdfdfd;white-space:pre;letter-spacing:-0.084px;">65</span>
<span style="left:278.00px;top:582px;font:13px 'Liberation Sans',sans-serif;line-height:16px;height:16px;color:#050305;white-space:pre;letter-spacing:-0.117px;">0.358466</span>
<span style="left:341.30px;top:582px;font:13px 'Liberation Sans',sans-serif;line-height:16px;height:16px;color:#050305;white-space:pre;letter-spacing:-0.117px;">0.001434</span>
<span style="left:405.20px;top:582px;font:13px 'Liberation Sans',sans-serif;line-height:16px;height:16px;color:#fdfdfd;white-space:pre;letter-spacing:-0.117px;">0.001566</span>
<span style="left:472.80px;top:582px;font:13px 'Liberation Sans',sans-serif;line-height:16px;height:16px;color:#050305;white-space:pre;letter-spacing:-0.499px;">-6.4591</span>
<span style="left:253.20px;top:599px;font:13px 'Liberation Sans',sans-serif;line-height:16px;height:16px;color:#fdfdfd;white-space:pre;letter-spacing:-0.084px;">70</span>
<span style="left:278.00px;top:599px;font:13px 'Liberation Sans',sans-serif;line-height:16px;height:16px;color:#050305;white-space:pre;letter-spacing:-0.117px;">0.377561</span>
<span style="left:341.30px;top:599px;font:13px 'Liberation Sans',sans-serif;line-height:16px;height:16px;color:#050305;white-space:pre;letter-spacing:-0.117px;">0.001510</span>
<span style="left:405.20px;top:599px;font:13px 'Liberation Sans',sans-serif;line-height:16px;height:16px;color:#fdfdfd;white-space:pre;letter-spacing:-0.117px;">0.001490</span>
<span style="left:472.80px;top:599px;font:13px 'Liberation Sans',sans-serif;line-height:16px;height:16px;color:#050305;white-space:pre;letter-spacing:-0.499px;">-6.5091</span>
<div style="left:399px;top:361px;width:62px;height:15px;background:#fdfdfd;border:1px solid #050305;"></div>
<span style="left:404.20px;top:361px;font:13px 'Liberation Sans',sans-serif;line-height:16px;height:16px;color:#050305;white-space:pre;letter-spacing:-0.117px;">0.003000</span>
<div style="left:206px;top:360px;width:64px;height:1px;background:repeating-linear-gradient(90deg,#fdfdfd 0 4px,#050305 4px 8px);"></div>
<div style="left:206px;top:614px;width:64px;height:1px;background:repeating-linear-gradient(90deg,#fdfdfd 0 4px,#050305 4px 8px);"></div>
<div style="left:206px;top:360px;width:1px;height:255px;background:repeating-linear-gradient(180deg,#fdfdfd 0 4px,#050305 4px 8px);"></div>
<div style="left:269px;top:360px;width:1px;height:255px;background:repeating-linear-gradient(180deg,#fdfdfd 0 4px,#050305 4px 8px);"></div>
<div style="left:398px;top:360px;width:64px;height:1px;background:repeating-linear-gradient(90deg,#fdfdfd 0 4px,#050305 4px 8px);"></div>
<div style="left:398px;top:614px;width:64px;height:1px;background:repeating-linear-gradient(90deg,#fdfdfd 0 4px,#050305 4px 8px);"></div>
<div style="left:398px;top:360px;width:1px;height:255px;background:repeating-linear-gradient(180deg,#fdfdfd 0 4px,#050305 4px 8px);"></div>
<div style="left:461px;top:360px;width:1px;height:255px;background:repeating-linear-gradient(180deg,#fdfdfd 0 4px,#050305 4px 8px);"></div>
<div style="left:845px;top:343px;width:16px;height:339px;background:#c3c1c4;"></div>
<div style="left:845px;top:651px;width:16px;height:17px;background:repeating-conic-gradient(#000 0 25%,#c3c1c4 0 50%) 0 0/2px 2px;"></div>
<div style="left:845px;top:668px;width:16px;height:14px;background:#c3c1c4;"></div>
<div style="left:845px;top:668px;width:15px;height:1px;background:#fdfdfd;"></div>
<div style="left:845px;top:668px;width:1px;height:13px;background:#fdfdfd;"></div>
<div style="left:845px;top:681px;width:16px;height:1px;background:#050305;"></div>
<div style="left:860px;top:668px;width:1px;height:14px;background:#050305;"></div>
<div style="left:846px;top:680px;width:14px;height:1px;background:#858386;"></div>
<div style="left:859px;top:669px;width:1px;height:12px;background:#858386;"></div>
<svg style="left:849px;top:673px" width="8" height="4" viewBox="0 0 8 4" ><path d="M0 0h7l-3.500 3.500z" fill="#000"/></svg>
<div style="left:844px;top:343px;width:1px;height:339px;background:#c3c1c4;"></div>
<div style="left:180px;top:682px;width:681px;height:16px;background:#c3c1c4;"></div>
<div style="left:180px;top:682px;width:665px;height:1px;background:#050305;"></div>
<div style="left:180px;top:683px;width:15px;height:15px;background:#c3c1c4;"></div>
<div style="left:180px;top:683px;width:14px;height:1px;background:#fdfdfd;"></div>
<div style="left:180px;top:683px;width:1px;height:14px;background:#fdfdfd;"></div>
<div style="left:180px;top:697px;width:15px;height:1px;background:#858386;"></div>
<div style="left:194px;top:683px;width:1px;height:15px;background:#858386;"></div>
<div style="left:195px;top:683px;width:15px;height:15px;background:#c3c1c4;"></div>
<div style="left:195px;top:683px;width:14px;height:1px;background:#fdfdfd;"></div>
<div style="left:195px;top:683px;width:1px;height:14px;background:#fdfdfd;"></div>
<div style="left:195px;top:697px;width:15px;height:1px;background:#858386;"></div>
<div style="left:209px;top:683px;width:1px;height:15px;background:#858386;"></div>
<div style="left:210px;top:683px;width:15px;height:15px;background:#c3c1c4;"></div>
<div style="left:210px;top:683px;width:14px;height:1px;background:#fdfdfd;"></div>
<div style="left:210px;top:683px;width:1px;height:14px;background:#fdfdfd;"></div>
<div style="left:210px;top:697px;width:15px;height:1px;background:#858386;"></div>
<div style="left:224px;top:683px;width:1px;height:15px;background:#858386;"></div>
<div style="left:225px;top:683px;width:15px;height:15px;background:#c3c1c4;"></div>
<div style="left:225px;top:683px;width:14px;height:1px;background:#fdfdfd;"></div>
<div style="left:225px;top:683px;width:1px;height:14px;background:#fdfdfd;"></div>
<div style="left:225px;top:697px;width:15px;height:1px;background:#858386;"></div>
<div style="left:239px;top:683px;width:1px;height:15px;background:#858386;"></div>
<svg style="left:180px;top:685px" width="60" height="10" viewBox="0 0 60 10" shape-rendering="auto"><path d="M3.500 0v9" stroke="#000" stroke-width="1.400"/><path d="M10 0v9l-5-4.500z" fill="#000"/><path d="M24 0v9l-5-4.500z" fill="#000"/><path d="M36 0v9l5-4.500z" fill="#000"/><path d="M49 0v9l5-4.500z" fill="#000"/><path d="M55.500 0v9" stroke="#000" stroke-width="1.400"/></svg>
<svg style="left:240px;top:682px" width="160" height="16" viewBox="0 0 160 16" shape-rendering="auto">
<path d="M0 0h58l-6 14h-46z" fill="#fdfdfd"/><path d="M0 0l6 14M52 14l6-14" fill="none" stroke="#000"/>
<path d="M55 7l3 7M103 14l6-14" fill="none" stroke="#000"/>
<path d="M106 7l3 7M154 14l6-14" fill="none" stroke="#000"/>
<path d="M6 14.500h46" stroke="#858386" stroke-width=".8"/>
</svg>
<div style="left:240px;top:682px;width:58px;height:1px;background:#fdfdfd;"></div>
<span style="left:249.00px;top:684px;font:bold 11px 'DejaVu Sans Condensed','Liberation Sans',sans-serif;line-height:16px;height:16px;color:#050305;white-space:pre;letter-spacing:-0.122px;">Sheet1</span>
<span style="left:302.50px;top:684px;font:11px 'DejaVu Sans Condensed','Liberation Sans',sans-serif;line-height:16px;height:16px;color:#050305;white-space:pre;letter-spacing:-0.237px;">Sheet2</span>
<span style="left:353.50px;top:684px;font:11px 'DejaVu Sans Condensed','Liberation Sans',sans-serif;line-height:16px;height:16px;color:#050305;white-space:pre;letter-spacing:-0.237px;">Sheet3</span>
<div style="left:582px;top:683px;width:1px;height:15px;background:#858386;"></div>
<div style="left:583px;top:683px;width:1px;height:15px;background:#050305;"></div>
<div style="left:584px;top:683px;width:1px;height:15px;background:#fdfdfd;"></div>
<div style="left:585px;top:683px;width:16px;height:15px;background:#c3c1c4;"></div>
<div style="left:585px;top:683px;width:15px;height:1px;background:#fdfdfd;"></div>
<div style="left:585px;top:683px;width:1px;height:14px;background:#fdfdfd;"></div>
<div style="left:585px;top:697px;width:16px;height:1px;background:#050305;"></div>
<div style="left:600px;top:683px;width:1px;height:15px;background:#050305;"></div>
<div style="left:586px;top:696px;width:14px;height:1px;background:#858386;"></div>
<div style="left:599px;top:684px;width:1px;height:13px;background:#858386;"></div>
<svg style="left:590px;top:686px" width="5" height="8" viewBox="0 0 5 8" shape-rendering="auto"><path d="M5 0v9l-5-4.500z" fill="#000"/></svg>
<div style="left:798px;top:683px;width:27px;height:15px;background:repeating-conic-gradient(#000 0 25%,#c3c1c4 0 50%) 0 0/2px 2px;"></div>
<div style="left:825px;top:683px;width:15px;height:15px;background:#c3c1c4;"></div>
<div style="left:825px;top:683px;width:14px;height:1px;background:#fdfdfd;"></div>
<div style="left:825px;top:683px;width:1px;height:14px;background:#fdfdfd;"></div>
<div style="left:825px;top:697px;width:15px;height:1px;background:#050305;"></div>
<div style="left:839px;top:683px;width:1px;height:15px;background:#050305;"></div>
<div style="left:826px;top:696px;width:13px;height:1px;background:#858386;"></div>
<div style="left:838px;top:684px;width:1px;height:13px;background:#858386;"></div>
<svg style="left:831px;top:686px" width="5" height="8" viewBox="0 0 5 8" shape-rendering="auto"><path d="M0 0v9l5-4.500z" fill="#000"/></svg>
<div style="left:841px;top:683px;width:1px;height:15px;background:#fdfdfd;"></div>
<div style="left:842px;top:683px;width:1px;height:15px;background:#858386;"></div>
<div style="left:843px;top:683px;width:1px;height:15px;background:#050305;"></div>
<div style="left:845px;top:682px;width:16px;height:16px;background:#c3c1c4;"></div>
<div style="left:845px;top:682px;width:16px;height:1px;background:#050305;"></div>
<div style="left:845px;top:682px;width:1px;height:16px;background:#050305;"></div>
<svg style="left:849px;top:686px" width="12" height="12" viewBox="0 0 12 12" shape-rendering="auto"><path d="M11.500 .500l-11 11M11.500 4.500l-7 7M11.500 8.500l-3 3" stroke="#fdfdfd"/><path d="M11.500 1.500l-10 10M11.500 2.500l-9 9M11.500 5.500l-6 6M11.500 6.500l-5 5M11.500 9.500l-2 2" stroke="#858386"/></svg>
<div style="left:514px;top:159px;width:414px;height:455px;background:#c3c1c4;"></div>
<div style="left:515px;top:160px;width:411px;height:1px;background:#fdfdfd;"></div>
<div style="left:515px;top:160px;width:1px;height:452px;background:#fdfdfd;"></div>
<div style="left:514px;top:613px;width:414px;height:1px;background:#050305;"></div>
<div style="left:927px;top:159px;width:1px;height:455px;background:#050305;"></div>
<div style="left:515px;top:612px;width:412px;height:1px;background:#858386;"></div>
<div style="left:926px;top:160px;width:1px;height:453px;background:#858386;"></div>
<div style="left:517px;top:162px;width:408px;height:18px;background:#04007e;"></div>
<span style="left:520.00px;top:163px;font:bold 12px 'Liberation Sans',sans-serif;line-height:16px;height:16px;color:#fdfdfd;white-space:pre;letter-spacing:0.074px;">Chart Wizard - Step 2 of 4 - Chart Source Data</span>
<div style="left:889px;top:164px;width:16px;height:14px;background:#c3c1c4;"></div>
<div style="left:889px;top:164px;width:15px;height:1px;background:#fdfdfd;"></div>
<div style="left:889px;top:164px;width:1px;height:13px;background:#fdfdfd;"></div>
<div style="left:889px;top:177px;width:16px;height:1px;background:#050305;"></div>
<div style="left:904px;top:164px;width:1px;height:14px;background:#050305;"></div>
<div style="left:890px;top:176px;width:14px;height:1px;background:#858386;"></div>
<div style="left:903px;top:165px;width:1px;height:12px;background:#858386;"></div>
<div style="left:907px;top:164px;width:16px;height:14px;background:#c3c1c4;"></div>
<div style="left:907px;top:164px;width:15px;height:1px;background:#fdfdfd;"></div>
<div style="left:907px;top:164px;width:1px;height:13px;background:#fdfdfd;"></div>
<div style="left:907px;top:177px;width:16px;height:1px;background:#050305;"></div>
<div style="left:922px;top:164px;width:1px;height:14px;background:#050305;"></div>
<div style="left:908px;top:176px;width:14px;height:1px;background:#858386;"></div>
<div style="left:921px;top:165px;width:1px;height:12px;background:#858386;"></div>
<span style="left:893.500px;top:164px;font:bold 12px 'Liberation Sans',sans-serif;color:#000;line-height:14px">?</span>
<svg style="left:911px;top:167px" width="8" height="7" viewBox="0 0 8 7" shape-rendering="auto"><path d="M0 0l7.500 7M7.500 0l-7.500 7" stroke="#000" stroke-width="1.700" fill="none"/></svg>
<div style="left:523px;top:209px;width:395px;height:1px;background:#fdfdfd;"></div>
<div style="left:523px;top:209px;width:1px;height:366px;background:#fdfdfd;"></div>
<div style="left:524px;top:574px;width:394px;height:1px;background:#858386;"></div>
<div style="left:917px;top:210px;width:1px;height:365px;background:#858386;"></div>
<div style="left:523px;top:575px;width:396px;height:1px;background:#050305;"></div>
<div style="left:918px;top:209px;width:1px;height:367px;background:#050305;"></div>
<div style="left:600px;top:190px;width:51px;height:19px;background:#c3c1c4;"></div>
<div style="left:601px;top:190px;width:48px;height:1px;background:#fdfdfd;"></div>
<div style="left:649px;top:191px;width:1px;height:18px;background:#858386;"></div>
<div style="left:650px;top:192px;width:1px;height:17px;background:#050305;"></div>
<span style="left:610.00px;top:194px;font:11px 'DejaVu Sans Condensed','Liberation Sans',sans-serif;line-height:16px;height:16px;color:#050305;white-space:pre;letter-spacing:-0.326px;">Series</span>
<div style="left:523px;top:188px;width:77px;height:22px;background:#c3c1c4;"></div>
<div style="left:525px;top:188px;width:73px;height:1px;background:#fdfdfd;"></div>
<div style="left:523px;top:190px;width:1px;height:20px;background:#fdfdfd;"></div>
<div style="left:524px;top:189px;width:1px;height:1px;background:#fdfdfd;"></div>
<div style="left:598px;top:190px;width:1px;height:19px;background:#858386;"></div>
<div style="left:599px;top:190px;width:1px;height:19px;background:#050305;"></div>
<div style="left:598px;top:189px;width:1px;height:1px;background:#050305;"></div>
<span style="left:531.50px;top:193px;font:11px 'DejaVu Sans Condensed','Liberation Sans',sans-serif;line-height:16px;height:16px;color:#050305;white-space:pre;letter-spacing:-0.113px;">Data Range</span>
<div style="left:553px;top:217px;width:332px;height:168px;background:#fdfdfd;"></div>
<div style="left:553px;top:217px;width:332px;height:1px;background:#858386;"></div>
<div style="left:553px;top:217px;width:1px;height:168px;background:#858386;"></div>
<div style="left:607px;top:233px;width:222px;height:125px;background:#c3c1c4;"></div>
<div style="left:607px;top:233px;width:222px;height:1px;background:#858386;"></div>
<div style="left:828px;top:233px;width:1px;height:125px;background:#858386;"></div>
<div style="left:604px;top:233px;width:3px;height:1px;background:#050305;"></div>
<span style="left:566.00px;top:225px;font:8.5px 'Liberation Sans',sans-serif;line-height:16px;height:16px;color:#050305;white-space:pre;letter-spacing:0.006px;">0.003500</span>
<div style="left:607px;top:251px;width:221px;height:1px;background:#050305;"></div>
<div style="left:604px;top:251px;width:3px;height:1px;background:#050305;"></div>
<span style="left:566.00px;top:243px;font:8.5px 'Liberation Sans',sans-serif;line-height:16px;height:16px;color:#050305;white-space:pre;letter-spacing:0.006px;">0.003000</span>
<div style="left:607px;top:268px;width:221px;height:1px;background:#050305;"></div>
<div style="left:604px;top:268px;width:3px;height:1px;background:#050305;"></div>
<span style="left:566.00px;top:260px;font:8.5px 'Liberation Sans',sans-serif;line-height:16px;height:16px;color:#050305;white-space:pre;letter-spacing:0.006px;">0.002500</span>
<div style="left:607px;top:286px;width:221px;height:1px;background:#050305;"></div>
<div style="left:604px;top:286px;width:3px;height:1px;background:#050305;"></div>
<span style="left:566.00px;top:278px;font:8.5px 'Liberation Sans',sans-serif;line-height:16px;height:16px;color:#050305;white-space:pre;letter-spacing:0.006px;">0.002000</span>
<div style="left:607px;top:304px;width:221px;height:1px;background:#050305;"></div>
<div style="left:604px;top:304px;width:3px;height:1px;background:#050305;"></div>
<span style="left:566.00px;top:296px;font:8.5px 'Liberation Sans',sans-serif;line-height:16px;height:16px;color:#050305;white-space:pre;letter-spacing:0.006px;">0.001500</span>
<div style="left:607px;top:322px;width:221px;height:1px;background:#050305;"></div>
<div style="left:604px;top:322px;width:3px;height:1px;background:#050305;"></div>
<span style="left:566.00px;top:314px;font:8.5px 'Liberation Sans',sans-serif;line-height:16px;height:16px;color:#050305;white-space:pre;letter-spacing:0.006px;">0.001000</span>
<div style="left:607px;top:339px;width:221px;height:1px;background:#050305;"></div>
<div style="left:604px;top:339px;width:3px;height:1px;background:#050305;"></div>
<span style="left:566.00px;top:331px;font:8.5px 'Liberation Sans',sans-serif;line-height:16px;height:16px;color:#050305;white-space:pre;letter-spacing:0.006px;">0.000500</span>
<div style="left:604px;top:357px;width:3px;height:1px;background:#050305;"></div>
<span style="left:566.00px;top:349px;font:8.5px 'Liberation Sans',sans-serif;line-height:16px;height:16px;color:#050305;white-space:pre;letter-spacing:0.006px;">0.000000</span>
<div style="left:607px;top:233px;width:1px;height:125px;background:#050305;"></div>
<div style="left:607px;top:357px;width:222px;height:1px;background:#050305;"></div>
<div style="left:607px;top:357px;width:1px;height:4px;background:#050305;"></div>
<span style="left:605.15px;top:360px;font:8.5px 'Liberation Sans',sans-serif;line-height:16px;height:16px;color:#050305;white-space:pre;letter-spacing:-0.034px;">0</span>
<div style="left:635px;top:357px;width:1px;height:4px;background:#050305;"></div>
<span style="left:630.80px;top:360px;font:8.5px 'Liberation Sans',sans-serif;line-height:16px;height:16px;color:#050305;white-space:pre;letter-spacing:-0.034px;">10</span>
<div style="left:662px;top:357px;width:1px;height:4px;background:#050305;"></div>
<span style="left:657.80px;top:360px;font:8.5px 'Liberation Sans',sans-serif;line-height:16px;height:16px;color:#050305;white-space:pre;letter-spacing:-0.034px;">20</span>
<div style="left:690px;top:357px;width:1px;height:4px;background:#050305;"></div>
<span style="left:685.80px;top:360px;font:8.5px 'Liberation Sans',sans-serif;line-height:16px;height:16px;color:#050305;white-space:pre;letter-spacing:-0.034px;">30</span>
<div style="left:718px;top:357px;width:1px;height:4px;background:#050305;"></div>
<span style="left:713.80px;top:360px;font:8.5px 'Liberation Sans',sans-serif;line-height:16px;height:16px;color:#050305;white-space:pre;letter-spacing:-0.034px;">40</span>
<div style="left:745px;top:357px;width:1px;height:4px;background:#050305;"></div>
<span style="left:740.80px;top:360px;font:8.5px 'Liberation Sans',sans-serif;line-height:16px;height:16px;color:#050305;white-space:pre;letter-spacing:-0.034px;">50</span>
<div style="left:773px;top:357px;width:1px;height:4px;background:#050305;"></div>
<span style="left:768.80px;top:360px;font:8.5px 'Liberation Sans',sans-serif;line-height:16px;height:16px;color:#050305;white-space:pre;letter-spacing:-0.034px;">60</span>
<div style="left:800px;top:357px;width:1px;height:4px;background:#050305;"></div>
<span style="left:795.80px;top:360px;font:8.5px 'Liberation Sans',sans-serif;line-height:16px;height:16px;color:#050305;white-space:pre;letter-spacing:-0.034px;">70</span>
<div style="left:828px;top:357px;width:1px;height:4px;background:#050305;"></div>
<span style="left:823.80px;top:360px;font:8.5px 'Liberation Sans',sans-serif;line-height:16px;height:16px;color:#050305;white-space:pre;letter-spacing:-0.034px;">80</span>
<svg style="left:553px;top:217px" width="332" height="168" viewBox="0 0 332 168" shape-rendering="auto"><path d="M54.5 31.7l2.5 2.5-2.5 2.5-2.5-2.5z" fill="#00007f"/><path d="M68.3 36.9l2.5 2.5-2.5 2.5-2.5-2.5z" fill="#00007f"/><path d="M82.1 41.8l2.5 2.5-2.5 2.5-2.5-2.5z" fill="#00007f"/><path d="M95.9 46.5l2.5 2.5-2.5 2.5-2.5-2.5z" fill="#00007f"/><path d="M109.8 51.0l2.5 2.5-2.5 2.5-2.5-2.5z" fill="#00007f"/><path d="M123.6 55.2l2.5 2.5-2.5 2.5-2.5-2.5z" fill="#00007f"/><path d="M137.4 59.3l2.5 2.5-2.5 2.5-2.5-2.5z" fill="#00007f"/><path d="M151.2 63.1l2.5 2.5-2.5 2.5-2.5-2.5z" fill="#00007f"/><path d="M165.0 66.8l2.5 2.5-2.5 2.5-2.5-2.5z" fill="#00007f"/><path d="M178.8 70.2l2.5 2.5-2.5 2.5-2.5-2.5z" fill="#00007f"/><path d="M192.6 73.5l2.5 2.5-2.5 2.5-2.5-2.5z" fill="#00007f"/><path d="M206.4 76.7l2.5 2.5-2.5 2.5-2.5-2.5z" fill="#00007f"/><path d="M220.2 79.7l2.5 2.5-2.5 2.5-2.5-2.5z" fill="#00007f"/><path d="M234.1 82.5l2.5 2.5-2.5 2.5-2.5-2.5z" fill="#00007f"/><path d="M247.9 85.2l2.5 2.5-2.5 2.5-2.5-2.5z" fill="#00007f"/></svg>
<div style="left:841px;top:288px;width:38px;height:14px;background:#fdfdfd;border:1px solid #050305;"></div>
<svg style="left:843px;top:291px" width="7" height="7" viewBox="0 0 7 7" shape-rendering="auto"><path d="M3.500 .500l3 3-3 3-3-3z" fill="#00007f"/></svg>
<span style="left:852.00px;top:287px;font:7.5px 'Liberation Sans',sans-serif;line-height:16px;height:16px;color:#050305;white-space:pre;letter-spacing:-0.062px;">Series1</span>
<div style="left:534px;top:397px;width:371px;height:1px;background:#858386;"></div>
<div style="left:534px;top:398px;width:371px;height:1px;background:#fdfdfd;"></div>
<span style="left:534.50px;top:410px;font:11px 'DejaVu Sans Condensed','Liberation Sans',sans-serif;line-height:16px;height:16px;color:#050305;white-space:pre;letter-spacing:-0.172px;"><u>D</u>ata range:</span>
<div style="left:612px;top:408px;width:293px;height:19px;background:#fdfdfd;"></div>
<div style="left:612px;top:408px;width:292px;height:1px;background:#858386;"></div>
<div style="left:612px;top:408px;width:1px;height:18px;background:#858386;"></div>
<div style="left:613px;top:409px;width:290px;height:1px;background:#050305;"></div>
<div style="left:613px;top:409px;width:1px;height:16px;background:#050305;"></div>
<div style="left:612px;top:426px;width:293px;height:1px;background:#fdfdfd;"></div>
<div style="left:904px;top:408px;width:1px;height:19px;background:#fdfdfd;"></div>
<div style="left:613px;top:425px;width:291px;height:1px;background:#c3c1c4;"></div>
<div style="left:903px;top:409px;width:1px;height:17px;background:#c3c1c4;"></div>
<div style="left:615px;top:411px;width:269px;height:13px;background:#050305;"></div>
<span style="left:614.50px;top:410px;font:11px 'DejaVu Sans Condensed','Liberation Sans',sans-serif;line-height:16px;height:16px;color:#fdfdfd;white-space:pre;letter-spacing:-0.146px;">=Sheet1!$A$1:$A$15,Sheet1!$D$1:$D$15</span>
<div style="left:886px;top:410px;width:17px;height:15px;background:#c3c1c4;"></div>
<div style="left:886px;top:410px;width:16px;height:1px;background:#fdfdfd;"></div>
<div style="left:886px;top:410px;width:1px;height:14px;background:#fdfdfd;"></div>
<div style="left:886px;top:424px;width:17px;height:1px;background:#050305;"></div>
<div style="left:902px;top:410px;width:1px;height:15px;background:#050305;"></div>
<svg style="left:888px;top:411px" width="14" height="13" viewBox="0 0 14 13" shape-rendering="auto"><rect x=".5" y="1.500" width="10" height="10" fill="#fff" stroke="none"/><rect x="0" y="1" width="8" height="2" fill="#00007f"/><path d="M0 5.500h10M0 8.500h10" stroke="#858386" stroke-width=".8"/><path d="M5 3l6 2-2 1 3 3-1 1-3-3-1 2z" fill="#f00000"/><path d="M9 11h4V5" stroke="#000" fill="none"/></svg>
<span style="left:534.50px;top:440px;font:11px 'DejaVu Sans Condensed','Liberation Sans',sans-serif;line-height:16px;height:16px;color:#050305;white-space:pre;letter-spacing:-0.245px;">Series in:</span>
<svg style="left:613px;top:441px" width="12" height="12" viewBox="0 0 12 12" shape-rendering="auto"><circle cx="6" cy="6" r="5.500" fill="#fdfdfd"/><path d="M1.800 10.200A5.500 5.500 0 0 1 10.200 1.800" fill="none" stroke="#858386" stroke-width="1"/><path d="M2.600 9.400A4.500 4.500 0 0 1 9.400 2.600" fill="none" stroke="#000" stroke-width="1"/><path d="M10.200 1.800A5.500 5.500 0 0 1 1.800 10.200" fill="none" stroke="#fdfdfd" stroke-width="1"/><path d="M9.400 2.600A4.500 4.500 0 0 1 2.600 9.400" fill="none" stroke="#c3c1c4" stroke-width="1"/></svg>
<svg style="left:613px;top:460px" width="12" height="12" viewBox="0 0 12 12" shape-rendering="auto"><circle cx="6" cy="6" r="5.500" fill="#fdfdfd"/><path d="M1.800 10.200A5.500 5.500 0 0 1 10.200 1.800" fill="none" stroke="#858386" stroke-width="1"/><path d="M2.600 9.400A4.500 4.500 0 0 1 9.400 2.600" fill="none" stroke="#000" stroke-width="1"/><path d="M10.200 1.800A5.500 5.500 0 0 1 1.800 10.200" fill="none" stroke="#fdfdfd" stroke-width="1"/><path d="M9.400 2.600A4.500 4.500 0 0 1 2.600 9.400" fill="none" stroke="#c3c1c4" stroke-width="1"/><circle cx="6" cy="6" r="2" fill="#000"/></svg>
<span style="left:629.00px;top:441px;font:11px 'DejaVu Sans Condensed','Liberation Sans',sans-serif;line-height:16px;height:16px;color:#050305;white-space:pre;letter-spacing:-0.047px;"><u>R</u>ows</span>
<span style="left:629.00px;top:460px;font:11px 'DejaVu Sans Condensed','Liberation Sans',sans-serif;line-height:16px;height:16px;color:#050305;white-space:pre;letter-spacing:-0.509px;">Co<u>l</u>umns</span>
<div style="left:523px;top:582px;width:30px;height:23px;background:#c3c1c4;"></div>
<div style="left:523px;top:582px;width:29px;height:1px;background:#fdfdfd;"></div>
<div style="left:523px;top:582px;width:1px;height:22px;background:#fdfdfd;"></div>
<div style="left:523px;top:604px;width:30px;height:1px;background:#050305;"></div>
<div style="left:552px;top:582px;width:1px;height:23px;background:#050305;"></div>
<div style="left:524px;top:603px;width:28px;height:1px;background:#858386;"></div>
<div style="left:551px;top:583px;width:1px;height:21px;background:#858386;"></div>
<svg style="left:531px;top:585px" width="15" height="17" viewBox="0 0 15 17" shape-rendering="auto"><path d="M1.500 .500h11q1 0 1 1v9.500q0 1-1 1h-2.500l.5 3.500-4-3.500h-5q-1 0-1-1v-9.500q0-1 1-1z" fill="#ffffc8" stroke="#000"/></svg>
<span style="left:535px;top:585px;font:bold 12px 'Liberation Sans',sans-serif;color:#00007f;line-height:12px">?</span>
<div style="left:608px;top:583px;width:75px;height:22px;background:#c3c1c4;"></div>
<div style="left:608px;top:583px;width:74px;height:1px;background:#fdfdfd;"></div>
<div style="left:608px;top:583px;width:1px;height:21px;background:#fdfdfd;"></div>
<div style="left:608px;top:604px;width:75px;height:1px;background:#050305;"></div>
<div style="left:682px;top:583px;width:1px;height:22px;background:#050305;"></div>
<div style="left:609px;top:603px;width:73px;height:1px;background:#858386;"></div>
<div style="left:681px;top:584px;width:1px;height:20px;background:#858386;"></div>
<span style="left:627.50px;top:587px;font:11px 'DejaVu Sans Condensed','Liberation Sans',sans-serif;line-height:16px;height:16px;color:#050305;white-space:pre;letter-spacing:-0.258px;">Cancel</span>
<div style="left:689px;top:583px;width:74px;height:22px;background:#c3c1c4;"></div>
<div style="left:689px;top:583px;width:73px;height:1px;background:#fdfdfd;"></div>
<div style="left:689px;top:583px;width:1px;height:21px;background:#fdfdfd;"></div>
<div style="left:689px;top:604px;width:74px;height:1px;background:#050305;"></div>
<div style="left:762px;top:583px;width:1px;height:22px;background:#050305;"></div>
<div style="left:690px;top:603px;width:72px;height:1px;background:#858386;"></div>
<div style="left:761px;top:584px;width:1px;height:20px;background:#858386;"></div>
<span style="left:710.00px;top:587px;font:11px 'DejaVu Sans Condensed','Liberation Sans',sans-serif;line-height:16px;height:16px;color:#050305;white-space:pre;letter-spacing:-0.578px;">&lt; <u>B</u>ack</span>
<div style="left:764px;top:582px;width:75px;height:24px;background:#050305;"></div>
<div style="left:765px;top:583px;width:73px;height:22px;background:#c3c1c4;"></div>
<div style="left:765px;top:583px;width:72px;height:1px;background:#fdfdfd;"></div>
<div style="left:765px;top:583px;width:1px;height:21px;background:#fdfdfd;"></div>
<div style="left:765px;top:604px;width:73px;height:1px;background:#050305;"></div>
<div style="left:837px;top:583px;width:1px;height:22px;background:#050305;"></div>
<div style="left:766px;top:603px;width:71px;height:1px;background:#858386;"></div>
<div style="left:836px;top:584px;width:1px;height:20px;background:#858386;"></div>
<span style="left:783.00px;top:587px;font:11px 'DejaVu Sans Condensed','Liberation Sans',sans-serif;line-height:16px;height:16px;color:#050305;white-space:pre;letter-spacing:-0.078px;">Next &gt;</span>
<div style="left:845px;top:583px;width:75px;height:22px;background:#c3c1c4;"></div>
<div style="left:845px;top:583px;width:74px;height:1px;background:#fdfdfd;"></div>
<div style="left:845px;top:583px;width:1px;height:21px;background:#fdfdfd;"></div>
<div style="left:845px;top:604px;width:75px;height:1px;background:#050305;"></div>
<div style="left:919px;top:583px;width:1px;height:22px;background:#050305;"></div>
<div style="left:846px;top:603px;width:73px;height:1px;background:#858386;"></div>
<div style="left:918px;top:584px;width:1px;height:20px;background:#858386;"></div>
<span style="left:867.50px;top:587px;font:11px 'DejaVu Sans Condensed','Liberation Sans',sans-serif;line-height:16px;height:16px;color:#050305;white-space:pre;letter-spacing:-0.185px;"><u>F</u>inish</span>
</body></html>
